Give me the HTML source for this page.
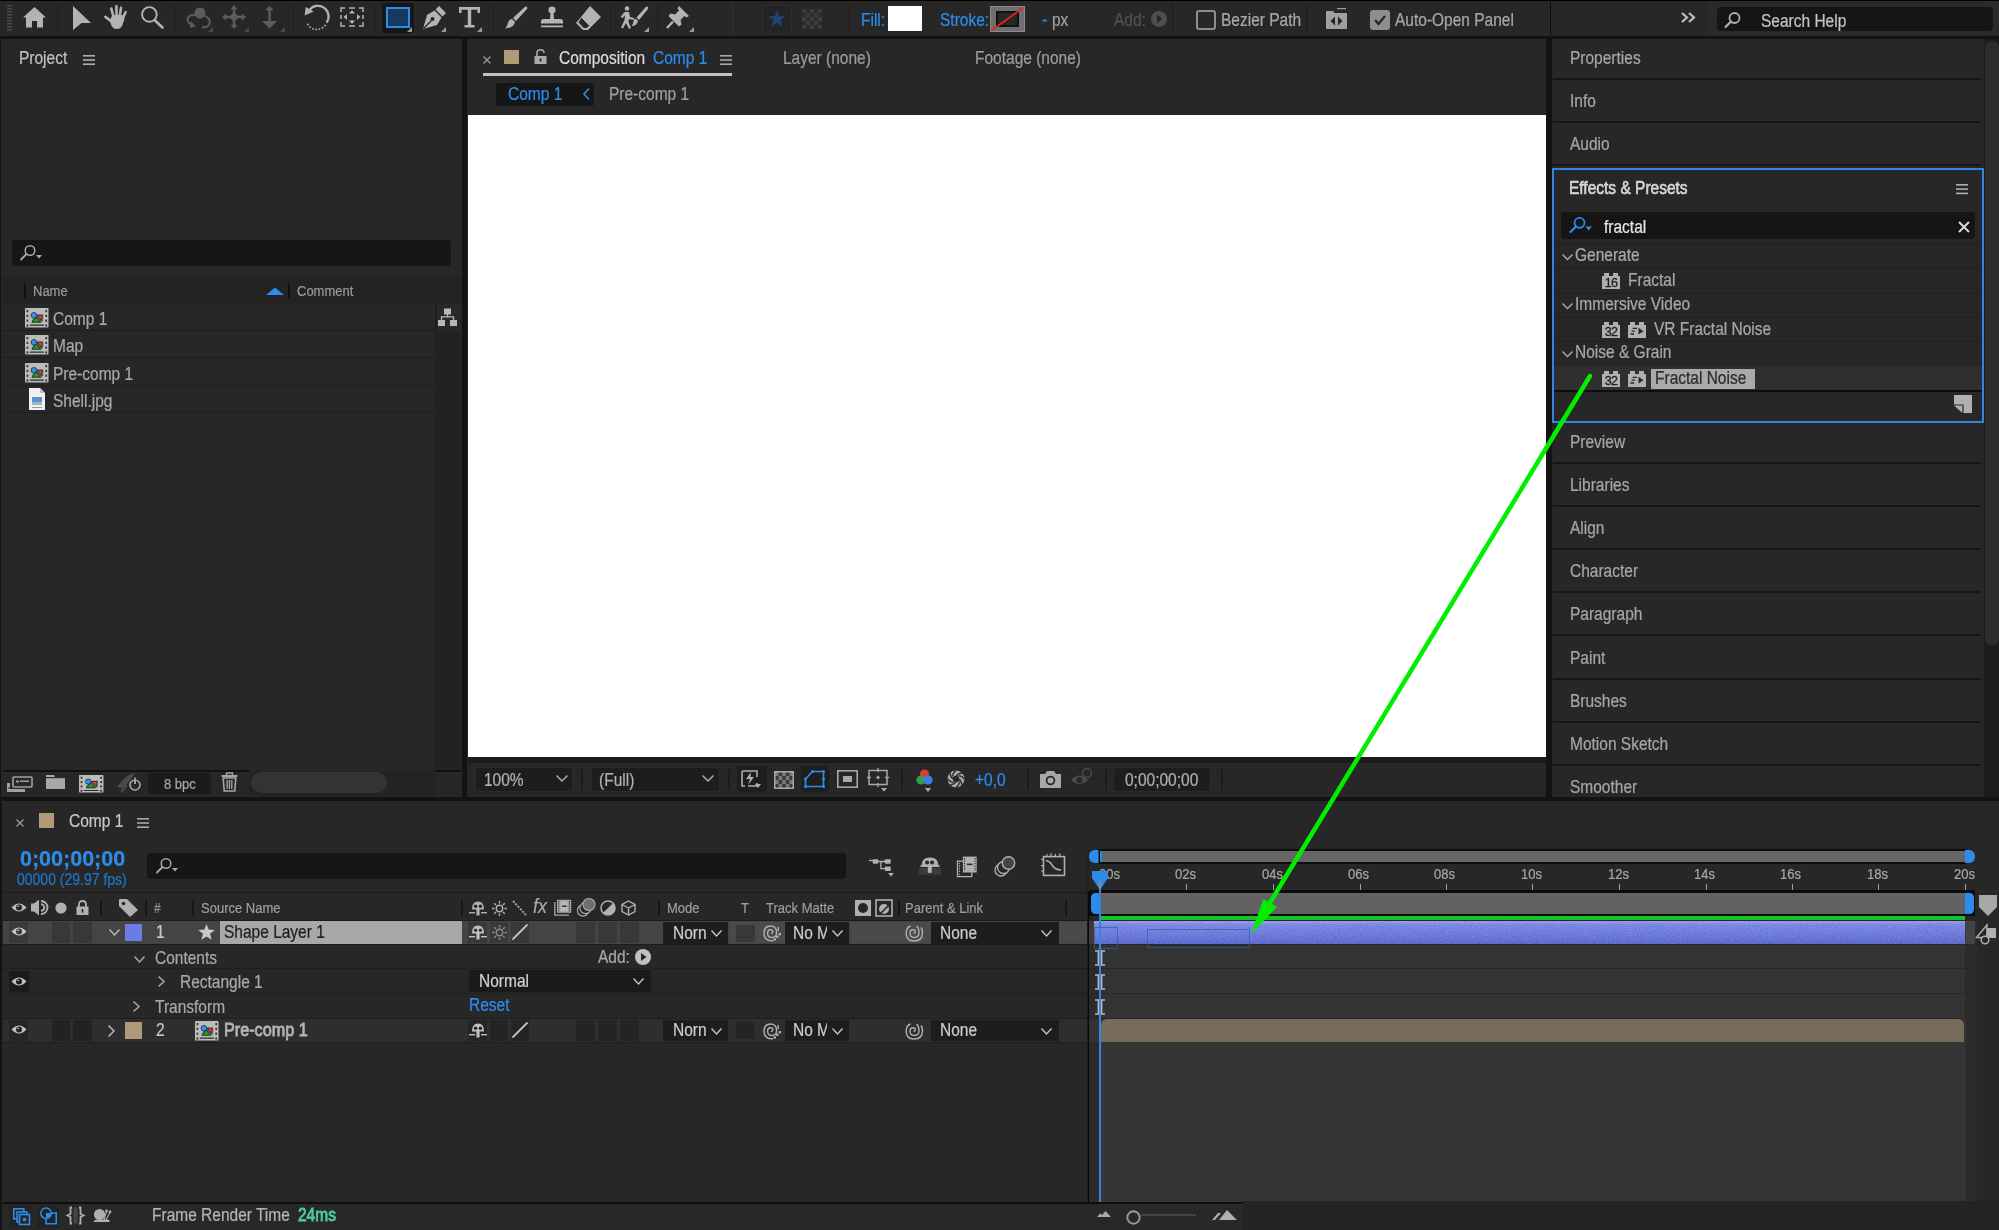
<!DOCTYPE html><html><head><meta charset="utf-8"><style>
html,body{margin:0;padding:0;width:1999px;height:1230px;overflow:hidden;background:#131313}
div{position:absolute;box-sizing:border-box}
.t{font-family:"Liberation Sans",sans-serif;line-height:1;white-space:nowrap;-webkit-text-stroke-width:0.2px}
#root{position:absolute;left:0;top:0;width:1999px;height:1230px;will-change:transform;overflow:hidden}
svg{overflow:visible}
</style></head><body><div id="root">
<div style="left:0px;top:0px;width:1999px;height:1230px;background:#131313;"></div>
<div style="left:0px;top:0px;width:1999px;height:1px;background:#000000;"></div>
<div style="left:0px;top:1px;width:1999px;height:35px;background:#272727;"></div>
<div style="left:1px;top:39px;width:461px;height:758px;background:#272727;"></div>
<div style="left:467px;top:39px;width:1079px;height:758px;background:#272727;"></div>
<div style="left:1552px;top:39px;width:432px;height:758px;background:#272727;"></div>
<div style="left:2px;top:801px;width:1997px;height:429px;background:#272727;"></div>
<svg style="position:absolute;left:7px;top:5px;" width="5" height="27" viewBox="0 0 5 27"><rect x="0" y="0" width="5" height="1.5" fill="#4a4a4a"/><rect x="0" y="3" width="5" height="1.5" fill="#4a4a4a"/><rect x="0" y="6" width="5" height="1.5" fill="#4a4a4a"/><rect x="0" y="9" width="5" height="1.5" fill="#4a4a4a"/><rect x="0" y="12" width="5" height="1.5" fill="#4a4a4a"/><rect x="0" y="15" width="5" height="1.5" fill="#4a4a4a"/><rect x="0" y="18" width="5" height="1.5" fill="#4a4a4a"/><rect x="0" y="21" width="5" height="1.5" fill="#4a4a4a"/><rect x="0" y="24" width="5" height="1.5" fill="#4a4a4a"/></svg>
<div style="left:57px;top:4px;width:1px;height:28px;background:#202020;"></div>
<svg style="position:absolute;left:23px;top:7px;" width="23" height="21" viewBox="0 0 23 21"><path d="M11.5 0 L23 10.5 L20 10.5 L20 20.5 L14 20.5 L14 14 L9 14 L9 20.5 L3 20.5 L3 10.5 L0 10.5 Z" fill="#b3b3b3"/></svg>
<svg style="position:absolute;left:73px;top:6px;" width="18" height="24" viewBox="0 0 18 24"><path d="M0 0 L18 17 L8.5 17 L0 24 Z" fill="#b3b3b3"/></svg>
<svg style="position:absolute;left:95px;top:0px;" width="40" height="36" viewBox="0 0 40 36"><path d="M10.4 16.9 L16.5 21.5 M16.3 8.6 L18.6 17 M21.4 6.4 L21.6 16 M26 7.9 L24.8 16 M30.6 12.2 L27.4 19" stroke="#b3b3b3" stroke-width="2.6" stroke-linecap="round"/><path d="M14.5 20.5 L17.5 15 L27.5 15 L29.5 19 L27.2 25.5 Q25.5 29 21.8 29 Q18.5 29 16.8 26.5 Z" fill="#b3b3b3"/></svg>
<svg style="position:absolute;left:140px;top:6px;" width="24" height="23" viewBox="0 0 24 23"><circle cx="9.4" cy="8.4" r="7.3" fill="none" stroke="#b3b3b3" stroke-width="1.9"/><path d="M15 14.5 L22.5 21.5" stroke="#b3b3b3" stroke-width="2.6" stroke-linecap="round"/></svg>
<div style="left:175px;top:4px;width:1px;height:28px;background:#202020;"></div>
<svg style="position:absolute;left:186px;top:7px;" width="27" height="25" viewBox="0 0 27 25"><circle cx="14" cy="6" r="5.5" fill="#5c5c5c"/><path d="M9 8 Q1 8 1.5 13 Q2 17 7 18" fill="none" stroke="#5c5c5c" stroke-width="2"/><path d="M4 14 L10 19 L4 21 Z" fill="#5c5c5c"/><path d="M19 9 Q26 12 23 18 Q21 21 16 20" fill="none" stroke="#5c5c5c" stroke-width="2"/></svg>
<svg style="position:absolute;left:208px;top:27px;" width="5" height="5" viewBox="0 0 5 5"><path d="M5 0 L5 5 L0 5 Z" fill="#4a4a4a"/></svg>
<svg style="position:absolute;left:222px;top:5px;" width="24" height="24" viewBox="0 0 24 24"><path d="M10.8 3 H13.2 V21 H10.8 Z M3 10.8 H21 V13.2 H3 Z" fill="#5c5c5c"/><path d="M12 0 L15.5 4.2 H8.5 Z M12 24 L15.5 19.8 H8.5 Z M0 12 L4.2 8.5 V15.5 Z M24 12 L19.8 8.5 V15.5 Z M12 7 L17 12 L12 17 L7 12 Z" fill="#5c5c5c"/></svg>
<svg style="position:absolute;left:244px;top:27px;" width="5" height="5" viewBox="0 0 5 5"><path d="M5 0 L5 5 L0 5 Z" fill="#4a4a4a"/></svg>
<svg style="position:absolute;left:262px;top:6px;" width="16" height="23" viewBox="0 0 16 23"><path d="M7.6 0 L12 4.2 H3.2 Z M6.4 3.5 H8.8 V16 H6.4 Z M0 15 H15.2 L7.6 22.6 Z" fill="#5c5c5c"/></svg>
<svg style="position:absolute;left:280px;top:27px;" width="5" height="5" viewBox="0 0 5 5"><path d="M5 0 L5 5 L0 5 Z" fill="#4a4a4a"/></svg>
<div style="left:293px;top:4px;width:1px;height:28px;background:#202020;"></div>
<svg style="position:absolute;left:304px;top:5px;" width="25" height="25" viewBox="0 0 25 25"><path d="M5.4 5.2 A10.5 10.5 0 0 1 22.6 17.6" fill="none" stroke="#b3b3b3" stroke-width="2.2"/><path d="M21 20.5 A10.5 10.5 0 0 1 2.6 16.5" fill="none" stroke="#b3b3b3" stroke-width="1.8" stroke-dasharray="0.1 3.2" stroke-linecap="round"/><path d="M0.6 10.6 L1.8 2 L9.6 6.6 Z" fill="#b3b3b3"/></svg>
<svg style="position:absolute;left:340px;top:7px;" width="24" height="20" viewBox="0 0 24 20"><path d="M1 5 V1 H5 M9 1 H15 M19 1 H23 V5 M23 8 V12 M23 15 V19 H19 M15 19 H9 M5 19 H1 V15 M1 12 V8" fill="none" stroke="#b3b3b3" stroke-width="1.5"/><path d="M12 3 L15 6.5 L9 6.5 Z M12 17 L15 13.5 L9 13.5 Z M3.5 10 L7 7 L7 13 Z M20.5 10 L17 7 L17 13 Z" fill="#b3b3b3"/></svg>
<div style="left:375px;top:4px;width:1px;height:28px;background:#202020;"></div>
<div style="left:382px;top:3px;width:32px;height:30px;background:#161616;border-radius:3px"></div>
<div style="left:386px;top:7px;width:24px;height:21px;background:#173860;border:2px solid #2d8ceb"></div>
<svg style="position:absolute;left:407px;top:27px;" width="5" height="5" viewBox="0 0 5 5"><path d="M5 0 L5 5 L0 5 Z" fill="#9a9a9a"/></svg>
<svg style="position:absolute;left:422px;top:6px;" width="24" height="23" viewBox="0 0 24 23"><path d="M17 0 L24 7 L20.5 10.5 L13.5 3.5 Z" fill="#b3b3b3"/><path d="M12.5 4.5 L19.5 11.5 L15 19 L1 23 L5 9 Z" fill="#b3b3b3"/><circle cx="10.5" cy="13" r="2" fill="#272727"/><path d="M1.5 22.5 L9.5 14.5" stroke="#272727" stroke-width="1.2"/></svg>
<svg style="position:absolute;left:441px;top:27px;" width="5" height="5" viewBox="0 0 5 5"><path d="M5 0 L5 5 L0 5 Z" fill="#9a9a9a"/></svg>
<svg style="position:absolute;left:459px;top:7px;" width="22" height="21" viewBox="0 0 22 21"><path d="M0 0 H21 V6 H18.5 V2.8 H12.2 V18 H15.5 V20.5 H5.5 V18 H8.8 V2.8 H2.5 V6 H0 Z" fill="#b3b3b3"/></svg>
<svg style="position:absolute;left:477px;top:27px;" width="5" height="5" viewBox="0 0 5 5"><path d="M5 0 L5 5 L0 5 Z" fill="#9a9a9a"/></svg>
<div style="left:493px;top:4px;width:1px;height:28px;background:#202020;"></div>
<svg style="position:absolute;left:504px;top:6px;" width="24" height="23" viewBox="0 0 24 23"><path d="M22.5 0.5 Q24 1.5 23 3 L12 15 L9 12 L21 0.8 Q21.8 0.2 22.5 0.5 Z" fill="#b3b3b3"/><path d="M8 13 L11 16 Q10 22 1 22.5 Q3.5 20 4 17 Q4.5 13.5 8 13 Z" fill="#b3b3b3"/></svg>
<svg style="position:absolute;left:540px;top:6px;" width="24" height="23" viewBox="0 0 24 23"><circle cx="12" cy="4" r="3.6" fill="#b3b3b3"/><path d="M10.5 7 H13.5 L14 13 H20.5 Q23 13 23 15.5 V17.5 H1 V15.5 Q1 13 3.5 13 H10 Z" fill="#b3b3b3"/><rect x="1" y="19.5" width="22" height="1.8" fill="#b3b3b3"/></svg>
<svg style="position:absolute;left:575px;top:6px;" width="26" height="23" viewBox="0 0 26 23"><path d="M15 0 L26 11 L13 24 L8 24 L1 17 Z" fill="#b3b3b3"/><path d="M6.5 11.5 L14.5 19.5 L11.5 22 L8.8 22 L3.5 16.5 Z" fill="#272727"/><path d="M6.5 11.5 L14.5 19.5" stroke="#b3b3b3" stroke-width="1"/></svg>
<div style="left:610px;top:4px;width:1px;height:28px;background:#202020;"></div>
<svg style="position:absolute;left:620px;top:6px;" width="29" height="24" viewBox="0 0 29 24"><circle cx="7" cy="2.5" r="2.3" fill="#b3b3b3"/><path d="M5 6 L9 6 L10 11 L14 12 L13.5 14 L9 13 L8.5 16 L11 22 L9 23 L6 17 L3 22.5 L1 21.5 L4.5 14 L5 9.5 L2.5 12 L0.5 11 L4 6.5 Z" fill="#b3b3b3"/><path d="M27.5 0.5 Q29 1.5 28 3 L19 14 L16.5 11.5 L26 0.8 Z" fill="#b3b3b3"/><path d="M15.5 12.5 L18 15 Q17 20 11.5 20 Q13 18.5 13.3 16 Q13.6 13 15.5 12.5 Z" fill="#b3b3b3"/></svg>
<svg style="position:absolute;left:644px;top:27px;" width="5" height="5" viewBox="0 0 5 5"><path d="M5 0 L5 5 L0 5 Z" fill="#9a9a9a"/></svg>
<div style="left:657px;top:4px;width:1px;height:28px;background:#202020;"></div>
<svg style="position:absolute;left:666px;top:6px;" width="23" height="23" viewBox="0 0 23 23"><path d="M13 0 L23 10 L20.5 11.5 L18.5 10 L14.5 14 L15.5 18.5 L13 20.5 L2.5 10 L4.5 7.5 L9 8.5 L13 4.5 L11.5 2.5 Z" fill="#b3b3b3"/><path d="M7 15.5 L1 22" stroke="#b3b3b3" stroke-width="2.5"/></svg>
<svg style="position:absolute;left:689px;top:27px;" width="5" height="5" viewBox="0 0 5 5"><path d="M5 0 L5 5 L0 5 Z" fill="#9a9a9a"/></svg>
<div style="left:732px;top:2px;width:1px;height:33px;background:#333333;"></div>
<div style="left:762px;top:5px;width:30px;height:29px;background:#242424;border:1px solid #2e2e2e;border-radius:3px"></div>
<svg style="position:absolute;left:768px;top:10px;" width="18" height="17" viewBox="0 0 18 17"><path d="M9 0 L11.2 6 L17.5 6.2 L12.5 10 L14.3 16.5 L9 12.8 L3.7 16.5 L5.5 10 L0.5 6.2 L6.8 6 Z" fill="#1f4470"/></svg>
<svg style="position:absolute;left:802px;top:9px;" width="20" height="20" viewBox="0 0 20 20"><rect width="20" height="20" fill="#2c2c2c"/><rect x="0" y="0" width="4" height="4" fill="#3c3c3c"/><rect x="0" y="8" width="4" height="4" fill="#3c3c3c"/><rect x="0" y="16" width="4" height="4" fill="#3c3c3c"/><rect x="4" y="4" width="4" height="4" fill="#3c3c3c"/><rect x="4" y="12" width="4" height="4" fill="#3c3c3c"/><rect x="8" y="0" width="4" height="4" fill="#3c3c3c"/><rect x="8" y="8" width="4" height="4" fill="#3c3c3c"/><rect x="8" y="16" width="4" height="4" fill="#3c3c3c"/><rect x="12" y="4" width="4" height="4" fill="#3c3c3c"/><rect x="12" y="12" width="4" height="4" fill="#3c3c3c"/><rect x="16" y="0" width="4" height="4" fill="#3c3c3c"/><rect x="16" y="8" width="4" height="4" fill="#3c3c3c"/><rect x="16" y="16" width="4" height="4" fill="#3c3c3c"/></svg>
<div style="left:849px;top:5px;width:1px;height:27px;background:#1a1a1a;"></div>
<div class="t" style="left:861px;top:13px;font-size:15.5px;color:#2d8ceb;transform:scaleY(1.16);transform-origin:0 14px;">Fill:</div>
<div style="left:888px;top:6px;width:34px;height:25px;background:#ffffff;"></div>
<div class="t" style="left:940px;top:13px;font-size:15.5px;color:#2d8ceb;transform:scaleY(1.16);transform-origin:0 14px;">Stroke:</div>
<div style="left:990px;top:6px;width:35px;height:26px;background:#6f6f6f;border:1px solid #8a8a8a"></div>
<div style="left:996px;top:11px;width:23px;height:16px;background:#272727;border:2px solid #111"></div>
<svg style="position:absolute;left:991px;top:7px;" width="33" height="24" viewBox="0 0 33 24"><path d="M0.5 23.5 L32.5 0.5" stroke="#e8261e" stroke-width="1.6"/></svg>
<div class="t" style="left:1042px;top:13px;font-size:15.5px;color:#2d8ceb;transform:scaleY(1.16);transform-origin:0 14px;">-</div>
<div class="t" style="left:1052px;top:13px;font-size:15.5px;color:#a0a0a0;transform:scaleY(1.16);transform-origin:0 14px;">px</div>
<div class="t" style="left:1114px;top:13px;font-size:15.5px;color:#525252;transform:scaleY(1.16);transform-origin:0 14px;">Add:</div>
<svg style="position:absolute;left:1151px;top:11px;" width="16" height="16" viewBox="0 0 16 16"><circle cx="8" cy="8" r="8" fill="#4e4e4e"/><path d="M6 4 L11.5 8 L6 12 Z" fill="#272727"/></svg>
<div style="left:1172px;top:4px;width:1px;height:28px;background:#1a1a1a;"></div>
<div style="left:1196px;top:10px;width:20px;height:20px;background:transparent;border:2px solid #8e8e8e;border-radius:3px"></div>
<div class="t" style="left:1221px;top:13px;font-size:15.5px;color:#a8a8a8;transform:scaleY(1.16);transform-origin:0 14px;">Bezier Path</div>
<div style="left:1306px;top:4px;width:1px;height:28px;background:#1a1a1a;"></div>
<svg style="position:absolute;left:1326px;top:8px;" width="21" height="21" viewBox="0 0 21 21"><path d="M0 3 H7 L8.5 5 H21 V21 H0 Z" fill="#a0a0a0"/><rect x="11" y="0" width="9" height="1.2" fill="#a0a0a0"/><path d="M9 8.5 L4.5 13 L9 17.5 Z M12 8.5 L16.5 13 L12 17.5 Z" fill="#272727"/></svg>
<div style="left:1370px;top:10px;width:20px;height:20px;background:#8e8e8e;border-radius:3px"></div>
<svg style="position:absolute;left:1373px;top:13px;" width="14" height="14" viewBox="0 0 14 14"><path d="M2 7 L5.5 11 L12 3" fill="none" stroke="#272727" stroke-width="2.4"/></svg>
<div class="t" style="left:1395px;top:13px;font-size:15.5px;color:#a8a8a8;transform:scaleY(1.16);transform-origin:0 14px;">Auto-Open Panel</div>
<div style="left:1550px;top:0px;width:1px;height:36px;background:#0e0e0e;"></div>
<svg style="position:absolute;left:1681px;top:12px;" width="15" height="11" viewBox="0 0 15 11"><path d="M1 1 L6 5.5 L1 10 M8 1 L13 5.5 L8 10" fill="none" stroke="#c0c0c0" stroke-width="2.2"/></svg>
<div style="left:1709px;top:1px;width:290px;height:35px;background:#2a2a2a;"></div>
<div style="left:1717px;top:7px;width:276px;height:24px;background:#151515;border-radius:4px"></div>
<svg style="position:absolute;left:1724px;top:12px;" width="17" height="16" viewBox="0 0 17 16"><circle cx="10.5" cy="6" r="5" fill="none" stroke="#b0b0b0" stroke-width="1.8"/><path d="M7 9.5 L1.5 15" stroke="#b0b0b0" stroke-width="2.2" stroke-linecap="round"/></svg>
<div class="t" style="left:1761px;top:14px;font-size:15.5px;color:#c4c4c4;transform:scaleY(1.16);transform-origin:0 14px;">Search Help</div>
<div class="t" style="left:19px;top:51px;font-size:15.5px;color:#c0c0c0;transform:scaleY(1.16);transform-origin:0 14px;">Project</div>
<svg style="position:absolute;left:83px;top:55px;" width="12" height="10" viewBox="0 0 12 10"><rect y="0" width="12" height="1.6" fill="#b0b0b0"/><rect y="4.2" width="12" height="1.6" fill="#b0b0b0"/><rect y="8.4" width="12" height="1.6" fill="#b0b0b0"/></svg>
<div style="left:12px;top:240px;width:439px;height:26px;background:#161616;border-radius:4px"></div>
<svg style="position:absolute;left:20px;top:245px;" width="25" height="16" viewBox="0 0 25 16"><circle cx="10" cy="5.5" r="4.8" fill="none" stroke="#a8a8a8" stroke-width="1.5"/><path d="M6.5 9 L1 14.5" stroke="#a8a8a8" stroke-width="1.8" stroke-linecap="round"/><path d="M16 10 L22 10 L19 13.5 Z" fill="#a8a8a8"/></svg>
<div style="left:3px;top:276px;width:432px;height:28px;background:#232323;"></div>
<div style="left:435px;top:276px;width:26px;height:28px;background:#232323;"></div>
<div style="left:24px;top:283px;width:2px;height:15px;background:#111;"></div>
<div class="t" style="left:33px;top:285px;font-size:13px;color:#9a9a9a;transform:scaleY(1.16);transform-origin:0 12px;">Name</div>
<svg style="position:absolute;left:266px;top:287px;" width="18" height="8" viewBox="0 0 18 8"><path d="M0 8 L9 0.5 L18 8 Z" fill="#2d8ceb"/></svg>
<div style="left:288px;top:283px;width:2px;height:15px;background:#111;"></div>
<div class="t" style="left:297px;top:285px;font-size:13px;color:#9a9a9a;transform:scaleY(1.16);transform-origin:0 12px;">Comment</div>
<div style="left:3px;top:304px;width:432px;height:27px;background:#272727;"></div>
<div style="left:3px;top:330px;width:432px;height:1px;background:#1d1d1d;"></div>
<svg style="position:absolute;left:25px;top:308px;" width="24" height="20" viewBox="0 0 24 20" preserveAspectRatio="none"><rect x="0" y="0" width="23.5" height="19.5" rx="0.8" fill="#bcbcbc"/><rect x="1.5" y="2.0" width="1.8" height="2.2" fill="#3a3a3a"/><rect x="20.3" y="2.0" width="1.8" height="2.2" fill="#3a3a3a"/><rect x="1.5" y="6.8" width="1.8" height="2.2" fill="#3a3a3a"/><rect x="20.3" y="6.8" width="1.8" height="2.2" fill="#3a3a3a"/><rect x="1.5" y="11.6" width="1.8" height="2.2" fill="#3a3a3a"/><rect x="20.3" y="11.6" width="1.8" height="2.2" fill="#3a3a3a"/><rect x="1.5" y="16.4" width="1.8" height="2.2" fill="#3a3a3a"/><rect x="20.3" y="16.4" width="1.8" height="2.2" fill="#3a3a3a"/><path d="M11.5 6.5 H18.2 V12.5 L16.5 14.8 H6.5 L7 12 Z" fill="#2a2a2a" opacity="0.55"/><path d="M12.2 7.2 L17.6 7.2 L16.4 12.6 Z" fill="#f03a3a" stroke="#1e1e1e" stroke-width="0.7"/><path d="M11.4 8.8 L15.4 14.2 L7.2 14.2 Z" fill="#1f9e2a" stroke="#1e1e1e" stroke-width="0.7"/><circle cx="8.9" cy="7.3" r="2.8" fill="#3592ea" stroke="#1e2a3a" stroke-width="0.8"/><rect x="4.7" y="16.6" width="14.3" height="1.2" rx="0.6" fill="#2a2a2a"/></svg>
<div class="t" style="left:53px;top:312px;font-size:15.5px;color:#a8a8a8;transform:scaleY(1.16);transform-origin:0 14px;">Comp 1</div>
<div style="left:3px;top:331px;width:432px;height:27px;background:#272727;"></div>
<div style="left:3px;top:357px;width:432px;height:1px;background:#1d1d1d;"></div>
<svg style="position:absolute;left:25px;top:335px;" width="24" height="20" viewBox="0 0 24 20" preserveAspectRatio="none"><rect x="0" y="0" width="23.5" height="19.5" rx="0.8" fill="#bcbcbc"/><rect x="1.5" y="2.0" width="1.8" height="2.2" fill="#3a3a3a"/><rect x="20.3" y="2.0" width="1.8" height="2.2" fill="#3a3a3a"/><rect x="1.5" y="6.8" width="1.8" height="2.2" fill="#3a3a3a"/><rect x="20.3" y="6.8" width="1.8" height="2.2" fill="#3a3a3a"/><rect x="1.5" y="11.6" width="1.8" height="2.2" fill="#3a3a3a"/><rect x="20.3" y="11.6" width="1.8" height="2.2" fill="#3a3a3a"/><rect x="1.5" y="16.4" width="1.8" height="2.2" fill="#3a3a3a"/><rect x="20.3" y="16.4" width="1.8" height="2.2" fill="#3a3a3a"/><path d="M11.5 6.5 H18.2 V12.5 L16.5 14.8 H6.5 L7 12 Z" fill="#2a2a2a" opacity="0.55"/><path d="M12.2 7.2 L17.6 7.2 L16.4 12.6 Z" fill="#f03a3a" stroke="#1e1e1e" stroke-width="0.7"/><path d="M11.4 8.8 L15.4 14.2 L7.2 14.2 Z" fill="#1f9e2a" stroke="#1e1e1e" stroke-width="0.7"/><circle cx="8.9" cy="7.3" r="2.8" fill="#3592ea" stroke="#1e2a3a" stroke-width="0.8"/><rect x="4.7" y="16.6" width="14.3" height="1.2" rx="0.6" fill="#2a2a2a"/></svg>
<div class="t" style="left:53px;top:339px;font-size:15.5px;color:#a8a8a8;transform:scaleY(1.16);transform-origin:0 14px;">Map</div>
<div style="left:3px;top:359px;width:432px;height:27px;background:#272727;"></div>
<div style="left:3px;top:385px;width:432px;height:1px;background:#1d1d1d;"></div>
<svg style="position:absolute;left:25px;top:363px;" width="24" height="20" viewBox="0 0 24 20" preserveAspectRatio="none"><rect x="0" y="0" width="23.5" height="19.5" rx="0.8" fill="#bcbcbc"/><rect x="1.5" y="2.0" width="1.8" height="2.2" fill="#3a3a3a"/><rect x="20.3" y="2.0" width="1.8" height="2.2" fill="#3a3a3a"/><rect x="1.5" y="6.8" width="1.8" height="2.2" fill="#3a3a3a"/><rect x="20.3" y="6.8" width="1.8" height="2.2" fill="#3a3a3a"/><rect x="1.5" y="11.6" width="1.8" height="2.2" fill="#3a3a3a"/><rect x="20.3" y="11.6" width="1.8" height="2.2" fill="#3a3a3a"/><rect x="1.5" y="16.4" width="1.8" height="2.2" fill="#3a3a3a"/><rect x="20.3" y="16.4" width="1.8" height="2.2" fill="#3a3a3a"/><path d="M11.5 6.5 H18.2 V12.5 L16.5 14.8 H6.5 L7 12 Z" fill="#2a2a2a" opacity="0.55"/><path d="M12.2 7.2 L17.6 7.2 L16.4 12.6 Z" fill="#f03a3a" stroke="#1e1e1e" stroke-width="0.7"/><path d="M11.4 8.8 L15.4 14.2 L7.2 14.2 Z" fill="#1f9e2a" stroke="#1e1e1e" stroke-width="0.7"/><circle cx="8.9" cy="7.3" r="2.8" fill="#3592ea" stroke="#1e2a3a" stroke-width="0.8"/><rect x="4.7" y="16.6" width="14.3" height="1.2" rx="0.6" fill="#2a2a2a"/></svg>
<div class="t" style="left:53px;top:367px;font-size:15.5px;color:#a8a8a8;transform:scaleY(1.16);transform-origin:0 14px;">Pre-comp 1</div>
<div style="left:3px;top:386px;width:432px;height:27px;background:#272727;"></div>
<div style="left:3px;top:412px;width:432px;height:1px;background:#1d1d1d;"></div>
<svg style="position:absolute;left:28px;top:388px;" width="18" height="22" viewBox="0 0 18 22"><path d="M1 0 H12 L17 5 V22 H1 Z" fill="#f0f0f0"/><path d="M12 0 V5 H17" fill="#bdbdbd"/><rect x="4" y="9" width="10" height="5" fill="#5b8fd6"/><rect x="4" y="14" width="10" height="3" fill="#9bb"/><rect x="4" y="19" width="10" height="1" fill="#999"/></svg>
<div class="t" style="left:53px;top:394px;font-size:15.5px;color:#a8a8a8;transform:scaleY(1.16);transform-origin:0 14px;">Shell.jpg</div>
<div style="left:435px;top:304px;width:26px;height:466px;background:#222222;"></div>
<div style="left:436px;top:304px;width:25px;height:27px;background:#282828;"></div>
<div style="left:435px;top:304px;width:2px;height:27px;background:#1e1e1e;"></div>
<svg style="position:absolute;left:438px;top:308px;" width="20" height="19" viewBox="0 0 20 19"><rect x="6" y="0.5" width="7" height="6" fill="#b8b8b8"/><path d="M9.5 6 V9 M3.5 12 V8.8 H15.5 V12" stroke="#b8b8b8" stroke-width="1.3" fill="none"/><rect x="0" y="12" width="7" height="6" fill="#b8b8b8"/><rect x="12" y="12" width="7" height="6" fill="#b8b8b8"/></svg>
<div style="left:3px;top:770px;width:246px;height:2px;background:#111;"></div>
<div style="left:435px;top:770px;width:26px;height:2px;background:#111;"></div>
<div style="left:3px;top:772px;width:246px;height:24px;background:#272727;"></div>
<div style="left:249px;top:771px;width:186px;height:25px;background:#232323;"></div>
<div style="left:435px;top:772px;width:26px;height:24px;background:#272727;"></div>
<svg style="position:absolute;left:7px;top:775px;" width="25" height="17" viewBox="0 0 25 17"><rect x="6" y="2" width="19" height="10" rx="1" fill="none" stroke="#a0a0a0" stroke-width="1.6"/><rect x="9" y="5.5" width="3" height="2" fill="#a0a0a0"/><rect x="13" y="5.5" width="9" height="1.5" fill="#a0a0a0"/><path d="M0 8 V17 H18 V14 H3 V8 Z" fill="#a0a0a0"/><rect x="1.5" y="12" width="1" height="2" fill="#272727"/></svg>
<svg style="position:absolute;left:46px;top:775px;" width="19" height="14" viewBox="0 0 19 14"><path d="M0 0 H8 L9 2 H19 V14 H0 Z" fill="#a8a8a8"/><rect x="0" y="2" width="19" height="1.2" fill="#272727"/></svg>
<svg style="position:absolute;left:79px;top:775px;" width="25" height="18" viewBox="0 0 24 20" preserveAspectRatio="none"><rect x="0" y="0" width="23.5" height="19.5" rx="0.8" fill="#bcbcbc"/><rect x="1.5" y="2.0" width="1.8" height="2.2" fill="#3a3a3a"/><rect x="20.3" y="2.0" width="1.8" height="2.2" fill="#3a3a3a"/><rect x="1.5" y="6.8" width="1.8" height="2.2" fill="#3a3a3a"/><rect x="20.3" y="6.8" width="1.8" height="2.2" fill="#3a3a3a"/><rect x="1.5" y="11.6" width="1.8" height="2.2" fill="#3a3a3a"/><rect x="20.3" y="11.6" width="1.8" height="2.2" fill="#3a3a3a"/><rect x="1.5" y="16.4" width="1.8" height="2.2" fill="#3a3a3a"/><rect x="20.3" y="16.4" width="1.8" height="2.2" fill="#3a3a3a"/><path d="M11.5 6.5 H18.2 V12.5 L16.5 14.8 H6.5 L7 12 Z" fill="#2a2a2a" opacity="0.55"/><path d="M12.2 7.2 L17.6 7.2 L16.4 12.6 Z" fill="#f03a3a" stroke="#1e1e1e" stroke-width="0.7"/><path d="M11.4 8.8 L15.4 14.2 L7.2 14.2 Z" fill="#1f9e2a" stroke="#1e1e1e" stroke-width="0.7"/><circle cx="8.9" cy="7.3" r="2.8" fill="#3592ea" stroke="#1e2a3a" stroke-width="0.8"/><rect x="4.7" y="16.6" width="14.3" height="1.2" rx="0.6" fill="#2a2a2a"/></svg>
<svg style="position:absolute;left:117px;top:773px;" width="25" height="19" viewBox="0 0 25 19"><path d="M0 14 L7 6 Q12 1 18 0 Q15 5 11 10 L5 15 Z" fill="#4c4c4c"/><path d="M4 19 L10 12" stroke="#4c4c4c" stroke-width="2"/><circle cx="18" cy="12" r="5" fill="none" stroke="#a8a8a8" stroke-width="1.6"/><rect x="17.2" y="5" width="1.6" height="6" fill="#a8a8a8"/><rect x="15.5" y="3.5" width="5" height="3" fill="#272727"/><rect x="17.2" y="4.5" width="1.6" height="6.5" fill="#a8a8a8"/></svg>
<div style="left:148px;top:773px;width:63px;height:21px;background:#1b1b1b;border-radius:3px"></div>
<div class="t" style="left:164px;top:778px;font-size:13px;color:#a8a8a8;transform:scaleY(1.16);transform-origin:0 12px;">8 bpc</div>
<svg style="position:absolute;left:221px;top:772px;" width="17" height="20" viewBox="0 0 17 20"><path d="M5.5 3 V1 H11.5 V3" fill="none" stroke="#a8a8a8" stroke-width="1.4"/><rect x="0.5" y="3" width="16" height="2" rx="0.8" fill="#a8a8a8"/><path d="M2.2 6 H14.8 L13.8 19 H3.2 Z" fill="none" stroke="#a8a8a8" stroke-width="1.6"/><path d="M6.2 8 V17 M8.5 8 V17 M10.8 8 V17" stroke="#a8a8a8" stroke-width="1.3"/></svg>
<div style="left:251px;top:772px;width:136px;height:21px;background:#333333;border-radius:11px"></div>
<svg style="position:absolute;left:483px;top:56px;" width="8" height="8" viewBox="0 0 8 8"><path d="M0.5 0.5 L7.5 7.5 M7.5 0.5 L0.5 7.5" stroke="#9a9a9a" stroke-width="1.3"/></svg>
<div style="left:504px;top:50px;width:15px;height:14px;background:#b09a78;"></div>
<svg style="position:absolute;left:534px;top:49px;" width="13" height="15" viewBox="0 0 13 15"><path d="M3 7 V4 Q3 0.8 6.5 0.8 Q10 0.8 10 4" fill="none" stroke="#aaa" stroke-width="1.6"/><rect x="0.5" y="7" width="12" height="8" fill="#aaa"/><rect x="5.6" y="9.5" width="1.8" height="3" fill="#272727"/></svg>
<div class="t" style="left:559px;top:51px;font-size:15.5px;color:#dcdcdc;transform:scaleY(1.16);transform-origin:0 14px;">Composition</div>
<div class="t" style="left:653px;top:51px;font-size:15.5px;color:#2d8ceb;transform:scaleY(1.16);transform-origin:0 14px;">Comp 1</div>
<svg style="position:absolute;left:720px;top:55px;" width="12" height="10" viewBox="0 0 12 10"><rect y="0" width="12" height="1.6" fill="#a8a8a8"/><rect y="4.2" width="12" height="1.6" fill="#a8a8a8"/><rect y="8.4" width="12" height="1.6" fill="#a8a8a8"/></svg>
<div style="left:483px;top:73px;width:249px;height:3px;background:#c2c2c2;"></div>
<div class="t" style="left:783px;top:51px;font-size:15.5px;color:#9c9c9c;transform:scaleY(1.16);transform-origin:0 14px;">Layer (none)</div>
<div class="t" style="left:975px;top:51px;font-size:15.5px;color:#9c9c9c;transform:scaleY(1.16);transform-origin:0 14px;">Footage (none)</div>
<div style="left:496px;top:83px;width:98px;height:23px;background:#161616;border-radius:3px"></div>
<div class="t" style="left:508px;top:87px;font-size:15.5px;color:#2d8ceb;transform:scaleY(1.16);transform-origin:0 14px;">Comp 1</div>
<svg style="position:absolute;left:583px;top:88px;" width="7" height="12" viewBox="0 0 7 12"><path d="M6 0.5 L1 6 L6 11.5" fill="none" stroke="#2d8ceb" stroke-width="1.6"/></svg>
<div class="t" style="left:609px;top:87px;font-size:15.5px;color:#a0a0a0;transform:scaleY(1.16);transform-origin:0 14px;">Pre-comp 1</div>
<div style="left:468px;top:115px;width:1078px;height:642px;background:#ffffff;"></div>
<div style="left:468px;top:757px;width:1078px;height:39px;background:#272727;"></div>
<div style="left:468px;top:757px;width:1078px;height:6px;background:#1b1b1b;"></div>
<div style="left:475px;top:767px;width:98px;height:25px;background:#1d1d1d;border-radius:4px;border:1px solid #2a2a2a"></div>
<div class="t" style="left:484px;top:773px;font-size:15.5px;color:#b0b0b0;transform:scaleY(1.16);transform-origin:0 14px;">100%</div>
<svg style="position:absolute;left:556px;top:775px;" width="12" height="7" viewBox="0 0 12 7"><path d="M0.5 0.5 L6 6 L11.5 0.5" fill="none" stroke="#b0b0b0" stroke-width="1.5"/></svg>
<div style="left:581px;top:769px;width:2px;height:21px;background:#1c1c1c;"></div>
<div style="left:591px;top:767px;width:129px;height:25px;background:#1d1d1d;border-radius:4px;border:1px solid #2a2a2a"></div>
<div class="t" style="left:599px;top:773px;font-size:15.5px;color:#b0b0b0;transform:scaleY(1.16);transform-origin:0 14px;">(Full)</div>
<svg style="position:absolute;left:702px;top:775px;" width="12" height="7" viewBox="0 0 12 7"><path d="M0.5 0.5 L6 6 L11.5 0.5" fill="none" stroke="#b0b0b0" stroke-width="1.5"/></svg>
<div style="left:728px;top:769px;width:2px;height:21px;background:#1c1c1c;"></div>
<div style="left:737px;top:766px;width:30px;height:26px;background:#1e1e1e;border-radius:3px"></div>
<svg style="position:absolute;left:741px;top:769px;" width="21" height="20" viewBox="0 0 21 20"><path d="M1 2 H16 V8 M16 14 V17 H7 M4 17 H1 V2" fill="none" stroke="#b0b0b0" stroke-width="1.6"/><path d="M10 3 L5 10 H9 L7 16 L13 8 H9.5 Z" fill="#b0b0b0"/><path d="M14 15 L20 15 L17 19 Z" fill="#b0b0b0"/></svg>
<svg style="position:absolute;left:774px;top:771px;" width="20" height="18" viewBox="0 0 20 18"><rect x="1" y="1" width="18" height="16" fill="#3a3a3a"/><rect x="1.0" y="1" width="3.6" height="4" fill="#7a7a7a"/><rect x="1.0" y="9" width="3.6" height="4" fill="#7a7a7a"/><rect x="4.6" y="5" width="3.6" height="4" fill="#7a7a7a"/><rect x="4.6" y="13" width="3.6" height="4" fill="#7a7a7a"/><rect x="8.2" y="1" width="3.6" height="4" fill="#7a7a7a"/><rect x="8.2" y="9" width="3.6" height="4" fill="#7a7a7a"/><rect x="11.8" y="5" width="3.6" height="4" fill="#7a7a7a"/><rect x="11.8" y="13" width="3.6" height="4" fill="#7a7a7a"/><rect x="15.4" y="1" width="3.6" height="4" fill="#7a7a7a"/><rect x="15.4" y="9" width="3.6" height="4" fill="#7a7a7a"/><rect x="0.75" y="0.75" width="18.5" height="16.5" fill="none" stroke="#a8a8a8" stroke-width="1.5"/></svg>
<div style="left:801px;top:766px;width:28px;height:26px;background:#1e1e1e;border-radius:3px"></div>
<svg style="position:absolute;left:804px;top:770px;" width="21" height="18" viewBox="0 0 21 18"><path d="M1.5 9 L8.5 1.5 H19.5 V16.5 H1.5 Z" fill="none" stroke="#2d8ceb" stroke-width="1.6"/><circle cx="1.5" cy="9" r="1.5" fill="#2d8ceb"/><circle cx="8.5" cy="1.5" r="1.5" fill="#2d8ceb"/><circle cx="19.5" cy="1.5" r="1.5" fill="#2d8ceb"/><circle cx="19.5" cy="9" r="1.5" fill="#2d8ceb"/><circle cx="19.5" cy="16.5" r="1.5" fill="#2d8ceb"/><circle cx="1.5" cy="16.5" r="1.5" fill="#2d8ceb"/></svg>
<svg style="position:absolute;left:837px;top:770px;" width="21" height="18" viewBox="0 0 21 18"><rect x="0.8" y="0.8" width="19.4" height="16.4" fill="none" stroke="#a8a8a8" stroke-width="1.6"/><rect x="6" y="6" width="9" height="6" fill="#a8a8a8"/></svg>
<svg style="position:absolute;left:867px;top:768px;" width="22" height="24" viewBox="0 0 22 24"><rect x="2" y="2.5" width="18" height="14" fill="none" stroke="#a8a8a8" stroke-width="1.5"/><path d="M11 0 V4 M11 15 V19 M0 9.5 H4 M18 9.5 H22" stroke="#a8a8a8" stroke-width="1.4"/><path d="M11 7.5 L13 9.5 L11 11.5 L9 9.5 Z" fill="#a8a8a8"/><path d="M14 20 L20 20 L17 23.5 Z" fill="#a8a8a8"/></svg>
<div style="left:901px;top:769px;width:2px;height:21px;background:#1c1c1c;"></div>
<svg style="position:absolute;left:915px;top:769px;" width="19" height="23" viewBox="0 0 19 23"><circle cx="9.5" cy="5" r="4.6" fill="#e23a3a"/><circle cx="6" cy="11" r="4.6" fill="#2fa04a"/><circle cx="13" cy="11" r="4.6" fill="#3d7fe0"/><path d="M10 19 L16 19 L13 23 Z" fill="#b0b0b0"/></svg>
<svg style="position:absolute;left:947px;top:770px;" width="18" height="18" viewBox="0 0 18 18"><circle cx="9" cy="9" r="8.5" fill="#a8a8a8"/><circle cx="9" cy="9" r="3.2" fill="#272727"/><path d="M9 0.5 Q5 4 6 6.5 M17.5 9 Q14 5 11.5 6 M9 17.5 Q13 14 12 11.5 M0.5 9 Q4 13 6.5 12 M3 3 Q4 8 6 8.5 M15 3 Q10 4 9.5 6 M15 15 Q14 10 12 9.5 M3 15 Q8 14 8.5 12" fill="none" stroke="#272727" stroke-width="1.3"/></svg>
<div class="t" style="left:975px;top:773px;font-size:15.5px;color:#2d8ceb;transform:scaleY(1.16);transform-origin:0 14px;">+0,0</div>
<div style="left:1027px;top:769px;width:2px;height:21px;background:#1c1c1c;"></div>
<svg style="position:absolute;left:1040px;top:771px;" width="21" height="17" viewBox="0 0 21 17"><path d="M0 3 H5 L7 0 H14 L16 3 H21 V17 H0 Z" fill="#a8a8a8"/><circle cx="10.5" cy="9.5" r="4.8" fill="#272727"/><circle cx="10.5" cy="9.5" r="3" fill="#a8a8a8"/></svg>
<svg style="position:absolute;left:1071px;top:768px;" width="22" height="20" viewBox="0 0 22 20"><path d="M0 12 Q8 3 17 12 Q8 20 0 12 Z" fill="#4a4a4a"/><circle cx="8.5" cy="12" r="3" fill="#272727"/><circle cx="16" cy="5" r="4.5" fill="none" stroke="#4a4a4a" stroke-width="1.5"/></svg>
<div style="left:1105px;top:769px;width:2px;height:21px;background:#1c1c1c;"></div>
<div style="left:1113px;top:767px;width:98px;height:25px;background:#1d1d1d;border-radius:4px;border:1px solid #2a2a2a"></div>
<div class="t" style="left:1125px;top:773px;font-size:15.5px;color:#b0b0b0;transform:scaleY(1.16);transform-origin:0 14px;">0;00;00;00</div>
<div style="left:1221px;top:769px;width:2px;height:21px;background:#1c1c1c;"></div>
<div class="t" style="left:1570px;top:51px;font-size:15.5px;color:#a6a6a6;transform:scaleY(1.16);transform-origin:0 14px;">Properties</div>
<div class="t" style="left:1570px;top:94px;font-size:15.5px;color:#a6a6a6;transform:scaleY(1.16);transform-origin:0 14px;">Info</div>
<div class="t" style="left:1570px;top:137px;font-size:15.5px;color:#a6a6a6;transform:scaleY(1.16);transform-origin:0 14px;">Audio</div>
<div style="left:1553px;top:78px;width:428px;height:2px;background:#161616;"></div>
<div style="left:1553px;top:121px;width:428px;height:2px;background:#161616;"></div>
<div style="left:1553px;top:164px;width:428px;height:2px;background:#161616;"></div>
<div style="left:1552px;top:168px;width:432px;height:255px;background:#272727;border:2px solid #3086dd"></div>
<div class="t" style="left:1569px;top:181px;font-size:15.5px;color:#d6d6d6;transform:scaleY(1.16);transform-origin:0 14px;-webkit-text-stroke-width:0.55px">Effects &amp; Presets</div>
<svg style="position:absolute;left:1956px;top:184px;" width="12" height="10" viewBox="0 0 12 10"><rect y="0" width="12" height="1.6" fill="#b0b0b0"/><rect y="4.3" width="12" height="1.6" fill="#b0b0b0"/><rect y="8.6" width="12" height="1.6" fill="#b0b0b0"/></svg>
<div style="left:1561px;top:212px;width:414px;height:27px;background:#151515;border-radius:4px"></div>
<svg style="position:absolute;left:1569px;top:217px;" width="26" height="16" viewBox="0 0 26 16"><circle cx="10.5" cy="5.8" r="5" fill="none" stroke="#2d8ceb" stroke-width="1.8"/><path d="M7 9.5 L1.5 15" stroke="#2d8ceb" stroke-width="2.2" stroke-linecap="round"/><path d="M16.5 9.5 L23 9.5 L19.7 13.5 Z" fill="#2d8ceb"/></svg>
<div class="t" style="left:1604px;top:220px;font-size:15.5px;color:#e6e6e6;transform:scaleY(1.16);transform-origin:0 14px;">fractal</div>
<svg style="position:absolute;left:1958px;top:221px;" width="12" height="12" viewBox="0 0 12 12"><path d="M1 1 L11 11 M11 1 L1 11" stroke="#d8d8d8" stroke-width="2"/></svg>
<div style="left:1554px;top:244px;width:428px;height:1px;background:#1f1f1f;"></div>
<svg style="position:absolute;left:1562px;top:254px;" width="11" height="7" viewBox="0 0 11 7"><path d="M0.5 0.5 L5.5 5.5 L10.5 0.5" fill="none" stroke="#a8a8a8" stroke-width="1.5"/></svg>
<div class="t" style="left:1575px;top:248px;font-size:15.5px;color:#a8a8a8;transform:scaleY(1.16);transform-origin:0 14px;">Generate</div>
<div style="left:1554px;top:268px;width:428px;height:1px;background:#1f1f1f;"></div>
<svg style="position:absolute;left:1602px;top:273px;" width="18" height="16" viewBox="0 0 18 16"><path d="M0 3 H2 V0 H7 V3 H11 V0 H16 V3 H18 V16 H0 Z" fill="#b0b0b0"/><text x="9" y="13.6" font-family="Liberation Sans" font-size="12.5" fill="#1e1e1e" stroke="#1e1e1e" stroke-width="0.3" text-anchor="middle" letter-spacing="-0.6">16</text></svg>
<div class="t" style="left:1628px;top:273px;font-size:15.5px;color:#a8a8a8;transform:scaleY(1.16);transform-origin:0 14px;">Fractal</div>
<div style="left:1554px;top:293px;width:428px;height:1px;background:#1f1f1f;"></div>
<svg style="position:absolute;left:1562px;top:303px;" width="11" height="7" viewBox="0 0 11 7"><path d="M0.5 0.5 L5.5 5.5 L10.5 0.5" fill="none" stroke="#a8a8a8" stroke-width="1.5"/></svg>
<div class="t" style="left:1575px;top:297px;font-size:15.5px;color:#a8a8a8;transform:scaleY(1.16);transform-origin:0 14px;">Immersive Video</div>
<div style="left:1554px;top:317px;width:428px;height:1px;background:#1f1f1f;"></div>
<svg style="position:absolute;left:1602px;top:322px;" width="18" height="16" viewBox="0 0 18 16"><path d="M0 3 H2 V0 H7 V3 H11 V0 H16 V3 H18 V16 H0 Z" fill="#b0b0b0"/><text x="9" y="13.6" font-family="Liberation Sans" font-size="12.5" fill="#1e1e1e" stroke="#1e1e1e" stroke-width="0.3" text-anchor="middle" letter-spacing="-0.6">32</text></svg>
<svg style="position:absolute;left:1628px;top:322px;" width="18" height="16" viewBox="0 0 18 16"><path d="M0 3 H2 V0 H7 V3 H11 V0 H16 V3 H18 V16 H0 Z" fill="#b0b0b0"/><path d="M4.6 6.4 H9 M3.6 9.2 H7 M2.4 12 H6" stroke="#272727" stroke-width="1.3"/><path d="M10.5 5.8 L15.5 9.2 L10.5 12.6 Z" fill="#272727"/></svg>
<div class="t" style="left:1654px;top:322px;font-size:15.5px;color:#a8a8a8;transform:scaleY(1.16);transform-origin:0 14px;">VR Fractal Noise</div>
<div style="left:1554px;top:341px;width:428px;height:1px;background:#1f1f1f;"></div>
<svg style="position:absolute;left:1562px;top:351px;" width="11" height="7" viewBox="0 0 11 7"><path d="M0.5 0.5 L5.5 5.5 L10.5 0.5" fill="none" stroke="#a8a8a8" stroke-width="1.5"/></svg>
<div class="t" style="left:1575px;top:345px;font-size:15.5px;color:#a8a8a8;transform:scaleY(1.16);transform-origin:0 14px;">Noise &amp; Grain</div>
<div style="left:1554px;top:366px;width:428px;height:1px;background:#1f1f1f;"></div>
<div style="left:1554px;top:366px;width:428px;height:25px;background:#2f2f2f;"></div>
<svg style="position:absolute;left:1602px;top:371px;" width="18" height="16" viewBox="0 0 18 16"><path d="M0 3 H2 V0 H7 V3 H11 V0 H16 V3 H18 V16 H0 Z" fill="#b0b0b0"/><text x="9" y="13.6" font-family="Liberation Sans" font-size="12.5" fill="#1e1e1e" stroke="#1e1e1e" stroke-width="0.3" text-anchor="middle" letter-spacing="-0.6">32</text></svg>
<svg style="position:absolute;left:1628px;top:371px;" width="18" height="16" viewBox="0 0 18 16"><path d="M0 3 H2 V0 H7 V3 H11 V0 H16 V3 H18 V16 H0 Z" fill="#b0b0b0"/><path d="M4.6 6.4 H9 M3.6 9.2 H7 M2.4 12 H6" stroke="#272727" stroke-width="1.3"/><path d="M10.5 5.8 L15.5 9.2 L10.5 12.6 Z" fill="#272727"/></svg>
<div style="left:1651px;top:369px;width:104px;height:20px;background:#a9a9a9;"></div>
<div class="t" style="left:1655px;top:371px;font-size:15.5px;color:#2b2b2b;transform:scaleY(1.16);transform-origin:0 14px;">Fractal Noise</div>
<div style="left:1554px;top:390px;width:428px;height:2px;background:#0e0e0e;"></div>
<svg style="position:absolute;left:1954px;top:395px;" width="18" height="18" viewBox="0 0 18 18"><path d="M0 0 H18 V18 H9.6 V9.4 H0 Z" fill="#b0b0b0"/><path d="M0 10.6 H8.4 V18 Z" fill="#b0b0b0"/></svg>
<div class="t" style="left:1570px;top:435px;font-size:15.5px;color:#a6a6a6;transform:scaleY(1.16);transform-origin:0 14px;">Preview</div>
<div style="left:1553px;top:462px;width:428px;height:2px;background:#161616;"></div>
<div class="t" style="left:1570px;top:478px;font-size:15.5px;color:#a6a6a6;transform:scaleY(1.16);transform-origin:0 14px;">Libraries</div>
<div style="left:1553px;top:505px;width:428px;height:2px;background:#161616;"></div>
<div class="t" style="left:1570px;top:521px;font-size:15.5px;color:#a6a6a6;transform:scaleY(1.16);transform-origin:0 14px;">Align</div>
<div style="left:1553px;top:548px;width:428px;height:2px;background:#161616;"></div>
<div class="t" style="left:1570px;top:564px;font-size:15.5px;color:#a6a6a6;transform:scaleY(1.16);transform-origin:0 14px;">Character</div>
<div style="left:1553px;top:591px;width:428px;height:2px;background:#161616;"></div>
<div class="t" style="left:1570px;top:607px;font-size:15.5px;color:#a6a6a6;transform:scaleY(1.16);transform-origin:0 14px;">Paragraph</div>
<div style="left:1553px;top:634px;width:428px;height:2px;background:#161616;"></div>
<div class="t" style="left:1570px;top:651px;font-size:15.5px;color:#a6a6a6;transform:scaleY(1.16);transform-origin:0 14px;">Paint</div>
<div style="left:1553px;top:678px;width:428px;height:2px;background:#161616;"></div>
<div class="t" style="left:1570px;top:694px;font-size:15.5px;color:#a6a6a6;transform:scaleY(1.16);transform-origin:0 14px;">Brushes</div>
<div style="left:1553px;top:721px;width:428px;height:2px;background:#161616;"></div>
<div class="t" style="left:1570px;top:737px;font-size:15.5px;color:#a6a6a6;transform:scaleY(1.16);transform-origin:0 14px;">Motion Sketch</div>
<div style="left:1553px;top:764px;width:428px;height:2px;background:#161616;"></div>
<div class="t" style="left:1570px;top:780px;font-size:15.5px;color:#a6a6a6;transform:scaleY(1.16);transform-origin:0 14px;">Smoother</div>
<div style="left:1984px;top:39px;width:15px;height:758px;background:#1c1c1c;"></div>
<div style="left:1985px;top:41px;width:14px;height:604px;background:#2c2c2c;border-radius:6px"></div>
<svg style="position:absolute;left:16px;top:819px;" width="8" height="8" viewBox="0 0 8 8"><path d="M0.5 0.5 L7.5 7.5 M7.5 0.5 L0.5 7.5" stroke="#9a9a9a" stroke-width="1.3"/></svg>
<div style="left:39px;top:813px;width:15px;height:15px;background:#b09a78;"></div>
<div class="t" style="left:69px;top:814px;font-size:15.5px;color:#c8c8c8;transform:scaleY(1.16);transform-origin:0 14px;">Comp 1</div>
<svg style="position:absolute;left:137px;top:818px;" width="12" height="10" viewBox="0 0 12 10"><rect y="0" width="12" height="1.6" fill="#a8a8a8"/><rect y="4.2" width="12" height="1.6" fill="#a8a8a8"/><rect y="8.4" width="12" height="1.6" fill="#a8a8a8"/></svg>
<div class="t" style="left:20px;top:849px;font-size:21.5px;color:#2d8ceb;font-weight:bold;">0;00;00;00</div>
<div class="t" style="left:17px;top:873px;font-size:14px;color:#1f76c6;transform:scaleY(1.16);transform-origin:0 13px;">00000 (29.97 fps)</div>
<div style="left:147px;top:853px;width:699px;height:26px;background:#161616;border-radius:4px"></div>
<svg style="position:absolute;left:156px;top:858px;" width="25" height="16" viewBox="0 0 25 16"><circle cx="10" cy="5.5" r="4.8" fill="none" stroke="#a8a8a8" stroke-width="1.5"/><path d="M6.5 9 L1 14.5" stroke="#a8a8a8" stroke-width="1.8" stroke-linecap="round"/><path d="M16 10 L22 10 L19 13.5 Z" fill="#a8a8a8"/></svg>
<svg style="position:absolute;left:868px;top:855px;" width="28" height="24" viewBox="0 0 28 24"><path d="M1 5.5 H5" stroke="#b0b0b0" stroke-width="1.3"/><rect x="4.7" y="4.3" width="5.5" height="4.4" rx="1" fill="#b0b0b0"/><rect x="16.8" y="4.3" width="6" height="4.4" rx="1" fill="#b0b0b0"/><path d="M10 6.5 H17 M12.9 6.5 V13.7 H17" fill="none" stroke="#b0b0b0" stroke-width="1.3"/><rect x="16.8" y="11.5" width="6" height="4.4" rx="1" fill="#b0b0b0"/><path d="M20 18 L26 18 L23 21.4 Z" fill="#b0b0b0"/></svg>
<svg style="position:absolute;left:918px;top:856px;" width="24" height="20" viewBox="0 0 24 20"><rect x="0.9" y="12" width="22" height="6.6" fill="#3c3c3c"/><path d="M3.6 9.8 Q3.6 1.5 12 1.5 Q20.4 1.5 20.4 9.8 L21.5 8.5 L21.5 11 H2.5 L2.5 8.5 Z" fill="#b0b0b0"/><circle cx="9.1" cy="6.6" r="2" fill="#272727"/><circle cx="14.1" cy="6.6" r="2" fill="#272727"/><rect x="9.8" y="10" width="4" height="7" rx="1.5" fill="#b0b0b0"/></svg>
<svg style="position:absolute;left:956px;top:856px;" width="22" height="21" viewBox="0 0 22 21"><rect x="1.5" y="5.2" width="14.3" height="15.4" fill="#272727" stroke="#b0b0b0" stroke-width="1.3"/><path d="M3.5 7 V19" stroke="#b0b0b0" stroke-width="1.2" stroke-dasharray="1.3 1.3"/><rect x="6.9" y="0.6" width="13.8" height="15.9" fill="#b0b0b0"/><path d="M8.6 2 V15 M19 2 V15" stroke="#272727" stroke-width="1.1" stroke-dasharray="1.2 1.3"/><rect x="11" y="7.6" width="5.5" height="1.5" fill="#272727"/></svg>
<svg style="position:absolute;left:993px;top:856px;" width="23" height="21" viewBox="0 0 23 21"><circle cx="8" cy="14" r="6" fill="#272727" stroke="#b0b0b0" stroke-width="1.3"/><circle cx="10.5" cy="11.5" r="6" fill="#272727" stroke="#b0b0b0" stroke-width="1.3"/><circle cx="15.5" cy="7" r="6.2" fill="#454545" stroke="#b0b0b0" stroke-width="1.4"/></svg>
<svg style="position:absolute;left:1041px;top:853px;" width="25" height="25" viewBox="0 0 25 25"><rect x="2.5" y="3.6" width="21" height="18.8" fill="none" stroke="#b0b0b0" stroke-width="1.6"/><path d="M5 7.8 Q8.5 7.8 11 12 Q14 17 20 17" fill="none" stroke="#b0b0b0" stroke-width="1.5"/><path d="M6 3.6 V1 M10 3.6 V0.3 M14.4 3.6 V1 M18.8 3.6 V0.3 M0 6.5 H2.5 M0 12.6 H2.5 M0 18 H2.5" stroke="#b0b0b0" stroke-width="1.2"/></svg>
<div style="left:3px;top:892px;width:1085px;height:1px;background:#1c1c1c;"></div>
<svg style="position:absolute;left:11px;top:902px;" width="16" height="11" viewBox="0 0 16 11"><path d="M0.5 5.5 Q8 -2.5 15.5 5.5 Q8 13.5 0.5 5.5 Z" fill="#b8b8b8"/><circle cx="8" cy="5.5" r="3" fill="#272727"/><circle cx="7" cy="4.3" r="0.9" fill="#b8b8b8"/></svg>
<svg style="position:absolute;left:31px;top:899px;" width="18" height="17" viewBox="0 0 18 17"><path d="M0 4.5 H3 L8 0.5 V16.5 L3 12.5 H0 Z" fill="#b0b0b0"/><path d="M10 5.2 A3.3 3.3 0 0 1 10 11.8 M10 2 A6.5 6.5 0 0 1 10 15" fill="none" stroke="#b0b0b0" stroke-width="1.9"/></svg>
<svg style="position:absolute;left:55px;top:902px;" width="12" height="12" viewBox="0 0 12 12"><circle cx="6" cy="6" r="5.6" fill="#b0b0b0"/></svg>
<svg style="position:absolute;left:76px;top:900px;" width="13" height="15" viewBox="0 0 13 15"><path d="M3 7 V4.5 Q3 1 6.5 1 Q10 1 10 4.5 V7" fill="none" stroke="#b0b0b0" stroke-width="1.8"/><rect x="0.5" y="6.5" width="12" height="8.5" fill="#b0b0b0"/><rect x="5.7" y="9" width="1.6" height="3.5" fill="#272727"/></svg>
<div style="left:100px;top:900px;width:2px;height:16px;background:#161616;"></div>
<svg style="position:absolute;left:119px;top:899px;" width="19" height="18" viewBox="0 0 19 18"><path d="M0 1 Q0 0 1 0 H8 L19 11 L11 18 L0 7 Z" fill="#b0b0b0"/><circle cx="4.5" cy="4.5" r="1.8" fill="#272727"/></svg>
<div style="left:145px;top:900px;width:2px;height:16px;background:#161616;"></div>
<div class="t" style="left:154px;top:903px;font-size:12px;color:#909090;transform:scaleY(1.16);transform-origin:0 11px;">#</div>
<div style="left:192px;top:900px;width:2px;height:16px;background:#161616;"></div>
<div class="t" style="left:201px;top:902px;font-size:13px;color:#9e9e9e;transform:scaleY(1.16);transform-origin:0 12px;">Source Name</div>
<div style="left:461px;top:900px;width:2px;height:16px;background:#161616;"></div>
<svg style="position:absolute;left:469px;top:901px;" width="18" height="15" viewBox="0 0 18 15"><path d="M3 8.5 Q3 0.5 9 0.5 Q15 0.5 15 8.5 Z" fill="#b0b0b0"/><circle cx="6.6" cy="5.2" r="1.7" fill="#272727"/><circle cx="11.4" cy="5.2" r="1.7" fill="#272727"/><rect x="7.4" y="8" width="3.2" height="6.5" fill="#b0b0b0"/><rect x="0" y="11" width="6" height="1.4" fill="#b0b0b0"/><rect x="12" y="11" width="6" height="1.4" fill="#b0b0b0"/></svg>
<svg style="position:absolute;left:492px;top:901px;" width="15" height="15" viewBox="0 0 15 15"><circle cx="7.5" cy="7.5" r="3.2" fill="none" stroke="#b0b0b0" stroke-width="1.4"/><path d="M7.5 0 V2.6 M7.5 12.4 V15 M0 7.5 H2.6 M12.4 7.5 H15 M2.2 2.2 L4 4 M11 11 L12.8 12.8 M12.8 2.2 L11 4 M4 11 L2.2 12.8" stroke="#b0b0b0" stroke-width="1.4"/></svg>
<svg style="position:absolute;left:512px;top:900px;" width="15" height="16" viewBox="0 0 15 16"><path d="M1 1 L14 15" stroke="#b0b0b0" stroke-width="1.7" stroke-dasharray="2.2 1.2"/></svg>
<div class="t" style="left:533px;top:898px;font-size:18px;color:#a8a8a8;transform:scaleY(1.16);transform-origin:0 16px;font-family:"Liberation Sans",sans-serif;letter-spacing:-1px"><i>fx</i></div>
<svg style="position:absolute;left:554px;top:899px;" width="18" height="17" viewBox="0 0 18 17"><path d="M0.8 3 V16.2 H15" fill="none" stroke="#a8a8a8" stroke-width="1.3"/><rect x="3" y="0.8" width="14.2" height="13" fill="#a8a8a8"/><path d="M4.8 2 V13 M15.4 2 V13" stroke="#272727" stroke-width="1.1" stroke-dasharray="1.2 1.1"/><rect x="6.8" y="2.8" width="6.8" height="9" fill="#b8b8b8"/><rect x="8" y="6.5" width="4.5" height="1.4" fill="#272727"/></svg>
<svg style="position:absolute;left:577px;top:898px;" width="19" height="19" viewBox="0 0 19 19"><circle cx="6" cy="12.5" r="5.6" fill="#272727" stroke="#a8a8a8" stroke-width="1.2"/><circle cx="8.5" cy="10" r="5.6" fill="#272727" stroke="#a8a8a8" stroke-width="1.2"/><circle cx="12" cy="6.5" r="6" fill="#6e6e6e" stroke="#a8a8a8" stroke-width="1.2"/></svg>
<svg style="position:absolute;left:600px;top:900px;" width="16" height="16" viewBox="0 0 16 16"><circle cx="8" cy="8" r="7" fill="none" stroke="#b0b0b0" stroke-width="1.5"/><path d="M13 3 A7 7 0 0 1 3 13 Z" fill="#b0b0b0"/></svg>
<svg style="position:absolute;left:621px;top:900px;" width="15" height="16" viewBox="0 0 15 16"><path d="M7.5 1 L14 4.5 V11.5 L7.5 15 L1 11.5 V4.5 Z M1 4.5 L7.5 8 L14 4.5 M7.5 8 V15" fill="none" stroke="#b0b0b0" stroke-width="1.4"/></svg>
<div style="left:658px;top:900px;width:2px;height:16px;background:#161616;"></div>
<div class="t" style="left:667px;top:902px;font-size:13px;color:#9e9e9e;transform:scaleY(1.16);transform-origin:0 12px;">Mode</div>
<div class="t" style="left:741px;top:902px;font-size:13px;color:#9e9e9e;transform:scaleY(1.16);transform-origin:0 12px;">T</div>
<div class="t" style="left:766px;top:902px;font-size:13px;color:#9e9e9e;transform:scaleY(1.16);transform-origin:0 12px;">Track Matte</div>
<svg style="position:absolute;left:855px;top:900px;" width="16" height="16" viewBox="0 0 16 16"><rect width="16" height="16" fill="#b0b0b0"/><circle cx="8" cy="8" r="5" fill="#272727"/></svg>
<svg style="position:absolute;left:876px;top:900px;" width="16" height="16" viewBox="0 0 16 16"><rect x="0" y="0" width="16" height="16" fill="none" stroke="#b0b0b0" stroke-width="1.6"/><circle cx="8" cy="9" r="5" fill="#b0b0b0"/><path d="M3 15 L15 3" stroke="#272727" stroke-width="1.6"/></svg>
<div style="left:898px;top:900px;width:2px;height:16px;background:#161616;"></div>
<div class="t" style="left:905px;top:902px;font-size:13px;color:#9e9e9e;transform:scaleY(1.16);transform-origin:0 12px;">Parent &amp; Link</div>
<div style="left:1065px;top:900px;width:2px;height:16px;background:#161616;"></div>
<div style="left:3px;top:920px;width:1085px;height:1px;background:#1c1c1c;"></div>
<div style="left:3px;top:921px;width:1085px;height:23px;background:#444444;"></div>
<div style="left:9px;top:922px;width:19px;height:21px;background:#393939;"></div>
<svg style="position:absolute;left:11px;top:926px;" width="16" height="11" viewBox="0 0 16 11"><path d="M0.5 5.5 Q8 -2.5 15.5 5.5 Q8 13.5 0.5 5.5 Z" fill="#c4c4c4"/><circle cx="8" cy="5.5" r="3" fill="#393939"/><circle cx="7" cy="4.3" r="0.9" fill="#c4c4c4"/></svg>
<div style="left:52px;top:922px;width:18px;height:21px;background:#383838;"></div>
<div style="left:73px;top:922px;width:19px;height:21px;background:#383838;"></div>
<svg style="position:absolute;left:109px;top:929px;" width="11" height="7" viewBox="0 0 11 7"><path d="M0.5 0.5 L5.5 6 L10.5 0.5" fill="none" stroke="#b8b8b8" stroke-width="1.5"/></svg>
<div style="left:125px;top:924px;width:17px;height:17px;background:#6b7de3;"></div>
<div class="t" style="left:156px;top:925px;font-size:15.5px;color:#c8c8c8;transform:scaleY(1.16);transform-origin:0 14px;">1</div>
<svg style="position:absolute;left:198px;top:924px;" width="17" height="16" viewBox="0 0 17 16"><path d="M8.5 0 L10.6 5.6 L16.8 5.9 L12 9.7 L13.7 15.8 L8.5 12.4 L3.3 15.8 L5 9.7 L0.2 5.9 L6.4 5.6 Z" fill="#c8c8c8"/></svg>
<div style="left:220px;top:921px;width:242px;height:23px;background:#a8a8a8;"></div>
<div class="t" style="left:224px;top:925px;font-size:15.5px;color:#1e1e1e;transform:scaleY(1.16);transform-origin:0 14px;">Shape Layer 1</div>
<div style="left:468px;top:922px;width:19px;height:21px;background:#383838;"></div>
<svg style="position:absolute;left:469px;top:925px;" width="18" height="15" viewBox="0 0 18 15"><path d="M3 8.5 Q3 0.5 9 0.5 Q15 0.5 15 8.5 Z" fill="#c0c0c0"/><circle cx="6.6" cy="5.2" r="1.7" fill="#383838"/><circle cx="11.4" cy="5.2" r="1.7" fill="#383838"/><rect x="7.4" y="8" width="3.2" height="6.5" fill="#c0c0c0"/><rect x="0" y="11" width="6" height="1.4" fill="#c0c0c0"/><rect x="12" y="11" width="6" height="1.4" fill="#c0c0c0"/></svg>
<div style="left:490px;top:922px;width:18px;height:21px;background:#383838;"></div>
<svg style="position:absolute;left:492px;top:925px;" width="15" height="15" viewBox="0 0 15 15"><circle cx="7.5" cy="7.5" r="3.2" fill="none" stroke="#888" stroke-width="1.4"/><path d="M7.5 0 V2.6 M7.5 12.4 V15 M0 7.5 H2.6 M12.4 7.5 H15 M2.2 2.2 L4 4 M11 11 L12.8 12.8 M12.8 2.2 L11 4 M4 11 L2.2 12.8" stroke="#888" stroke-width="1.4"/></svg>
<div style="left:511px;top:922px;width:18px;height:21px;background:#383838;"></div>
<svg style="position:absolute;left:512px;top:924px;" width="16" height="16" viewBox="0 0 16 16"><path d="M1 15 L15 1" stroke="#c0c0c0" stroke-width="1.8" stroke-linecap="round"/></svg>
<div style="left:576px;top:922px;width:19px;height:21px;background:#383838;"></div>
<div style="left:598px;top:922px;width:19px;height:21px;background:#383838;"></div>
<div style="left:620px;top:922px;width:19px;height:21px;background:#383838;"></div>
<div style="left:730px;top:922px;width:55px;height:21px;background:#4a4a4a;"></div>
<div style="left:851px;top:922px;width:80px;height:21px;background:#4a4a4a;"></div>
<div style="left:1059px;top:922px;width:29px;height:21px;background:#4a4a4a;"></div>
<div style="left:663px;top:922px;width:65px;height:22px;background:#1d1d1d;"></div>
<div class="t" style="left:673px;top:926px;font-size:15.5px;color:#cccccc;transform:scaleY(1.16);transform-origin:0 14px;">Norn</div>
<svg style="position:absolute;left:711px;top:930px;" width="11" height="7" viewBox="0 0 11 7"><path d="M0.5 0.5 L5.5 6 L10.5 0.5" fill="none" stroke="#c0c0c0" stroke-width="1.5"/></svg>
<div style="left:736px;top:925px;width:19px;height:17px;background:#383838;"></div>
<svg style="position:absolute;left:763px;top:925px;" width="18" height="17" viewBox="0 0 18 17"><path d="M8 8.5 Q9.8 8.5 9.8 6.8 Q9.8 4.8 7.6 4.8 Q4.6 4.8 4.6 8.3 Q4.6 12.5 8.8 12.5 Q13.6 12.5 13.6 7.5 Q13.6 1 7.5 1 Q1 1 1 8.3 Q1 15.8 8.8 15.8 H10" fill="none" stroke="#b0b0b0" stroke-width="1.4"/><rect x="14.5" y="2" width="1.4" height="4" fill="#b0b0b0"/><rect x="13" y="10.5" width="2.4" height="2.4" fill="#b0b0b0"/><rect x="15.6" y="8" width="2.4" height="2.4" fill="#b0b0b0"/><rect x="10.5" y="13.2" width="2.4" height="2.4" fill="#b0b0b0"/></svg>
<div style="left:785px;top:922px;width:64px;height:22px;background:#1d1d1d;"></div>
<div class="t" style="left:793px;top:926px;font-size:15.5px;color:#cccccc;transform:scaleY(1.16);transform-origin:0 14px;"><span style="display:inline-block;width:34px;overflow:hidden;vertical-align:top">No Matte</span></div>
<svg style="position:absolute;left:832px;top:930px;" width="11" height="7" viewBox="0 0 11 7"><path d="M0.5 0.5 L5.5 6 L10.5 0.5" fill="none" stroke="#c0c0c0" stroke-width="1.5"/></svg>
<svg style="position:absolute;left:905px;top:925px;" width="18" height="17" viewBox="0 0 18 17"><path d="M8.5 8.5 Q10.3 8.5 10.3 6.8 Q10.3 4.8 8.1 4.8 Q5 4.8 5 8.3 Q5 12.5 9.2 12.5 Q14 12.5 14 7.5 Q14 3 11.5 1 M16 2.5 Q17.5 4.5 17.5 8 Q17.5 16 9 16 Q1.2 16 1.2 8.3 Q1.2 2.5 5.5 1" fill="none" stroke="#b0b0b0" stroke-width="1.4"/></svg>
<div style="left:931px;top:922px;width:128px;height:22px;background:#1d1d1d;"></div>
<div class="t" style="left:940px;top:926px;font-size:15.5px;color:#cccccc;transform:scaleY(1.16);transform-origin:0 14px;">None</div>
<svg style="position:absolute;left:1041px;top:930px;" width="11" height="7" viewBox="0 0 11 7"><path d="M0.5 0.5 L5.5 6 L10.5 0.5" fill="none" stroke="#c0c0c0" stroke-width="1.5"/></svg>
<div style="left:3px;top:944px;width:1085px;height:1px;background:#1c1c1c;"></div>
<svg style="position:absolute;left:134px;top:956px;" width="11" height="7" viewBox="0 0 11 7"><path d="M0.5 0.5 L5.5 6 L10.5 0.5" fill="none" stroke="#a8a8a8" stroke-width="1.5"/></svg>
<div class="t" style="left:155px;top:951px;font-size:15.5px;color:#a8a8a8;transform:scaleY(1.16);transform-origin:0 14px;">Contents</div>
<div class="t" style="left:598px;top:950px;font-size:15.5px;color:#a8a8a8;transform:scaleY(1.16);transform-origin:0 14px;">Add:</div>
<svg style="position:absolute;left:635px;top:949px;" width="16" height="16" viewBox="0 0 16 16"><circle cx="8" cy="8" r="8" fill="#c0c0c0"/><path d="M6 4 L11.5 8 L6 12 Z" fill="#272727"/></svg>
<div style="left:3px;top:968px;width:1085px;height:1px;background:#1e1e1e;"></div>
<div style="left:9px;top:971px;width:20px;height:21px;background:#1b1b1b;"></div>
<svg style="position:absolute;left:11px;top:976px;" width="16" height="11" viewBox="0 0 16 11"><path d="M0.5 5.5 Q8 -2.5 15.5 5.5 Q8 13.5 0.5 5.5 Z" fill="#c0c0c0"/><circle cx="8" cy="5.5" r="3" fill="#1b1b1b"/><circle cx="7" cy="4.3" r="0.9" fill="#c0c0c0"/></svg>
<svg style="position:absolute;left:158px;top:976px;" width="7" height="11" viewBox="0 0 7 11"><path d="M0.5 0.5 L6 5.5 L0.5 10.5" fill="none" stroke="#a8a8a8" stroke-width="1.5"/></svg>
<div class="t" style="left:180px;top:975px;font-size:15.5px;color:#a8a8a8;transform:scaleY(1.16);transform-origin:0 14px;">Rectangle 1</div>
<div style="left:469px;top:970px;width:182px;height:22px;background:#1a1a1a;border-radius:2px"></div>
<div class="t" style="left:479px;top:974px;font-size:15.5px;color:#d0d0d0;transform:scaleY(1.16);transform-origin:0 14px;">Normal</div>
<svg style="position:absolute;left:633px;top:978px;" width="11" height="7" viewBox="0 0 11 7"><path d="M0.5 0.5 L5.5 6 L10.5 0.5" fill="none" stroke="#c0c0c0" stroke-width="1.5"/></svg>
<div style="left:3px;top:993px;width:1085px;height:1px;background:#1e1e1e;"></div>
<svg style="position:absolute;left:133px;top:1001px;" width="7" height="11" viewBox="0 0 7 11"><path d="M0.5 0.5 L6 5.5 L0.5 10.5" fill="none" stroke="#a8a8a8" stroke-width="1.5"/></svg>
<div class="t" style="left:155px;top:1000px;font-size:15.5px;color:#a8a8a8;transform:scaleY(1.16);transform-origin:0 14px;">Transform</div>
<div class="t" style="left:469px;top:998px;font-size:15.5px;color:#2d8ceb;transform:scaleY(1.16);transform-origin:0 14px;">Reset</div>
<div style="left:3px;top:1018px;width:1085px;height:1px;background:#1e1e1e;"></div>
<div style="left:3px;top:1019px;width:1085px;height:23px;background:#2e2e2e;"></div>
<div style="left:9px;top:1020px;width:19px;height:21px;background:#252525;"></div>
<svg style="position:absolute;left:11px;top:1024px;" width="16" height="11" viewBox="0 0 16 11"><path d="M0.5 5.5 Q8 -2.5 15.5 5.5 Q8 13.5 0.5 5.5 Z" fill="#c0c0c0"/><circle cx="8" cy="5.5" r="3" fill="#252525"/><circle cx="7" cy="4.3" r="0.9" fill="#c0c0c0"/></svg>
<div style="left:52px;top:1020px;width:18px;height:21px;background:#222;"></div>
<div style="left:73px;top:1020px;width:19px;height:21px;background:#222;"></div>
<svg style="position:absolute;left:108px;top:1025px;" width="7" height="12" viewBox="0 0 7 12"><path d="M0.5 0.5 L6 6.0 L0.5 11.5" fill="none" stroke="#b8b8b8" stroke-width="1.5"/></svg>
<div style="left:125px;top:1022px;width:17px;height:17px;background:#ae9a78;"></div>
<div class="t" style="left:156px;top:1023px;font-size:15.5px;color:#c8c8c8;transform:scaleY(1.16);transform-origin:0 14px;">2</div>
<svg style="position:absolute;left:195px;top:1021px;" width="24" height="20" viewBox="0 0 24 20" preserveAspectRatio="none"><rect x="0" y="0" width="23.5" height="19.5" rx="0.8" fill="#bcbcbc"/><rect x="1.5" y="2.0" width="1.8" height="2.2" fill="#3a3a3a"/><rect x="20.3" y="2.0" width="1.8" height="2.2" fill="#3a3a3a"/><rect x="1.5" y="6.8" width="1.8" height="2.2" fill="#3a3a3a"/><rect x="20.3" y="6.8" width="1.8" height="2.2" fill="#3a3a3a"/><rect x="1.5" y="11.6" width="1.8" height="2.2" fill="#3a3a3a"/><rect x="20.3" y="11.6" width="1.8" height="2.2" fill="#3a3a3a"/><rect x="1.5" y="16.4" width="1.8" height="2.2" fill="#3a3a3a"/><rect x="20.3" y="16.4" width="1.8" height="2.2" fill="#3a3a3a"/><path d="M11.5 6.5 H18.2 V12.5 L16.5 14.8 H6.5 L7 12 Z" fill="#2a2a2a" opacity="0.55"/><path d="M12.2 7.2 L17.6 7.2 L16.4 12.6 Z" fill="#f03a3a" stroke="#1e1e1e" stroke-width="0.7"/><path d="M11.4 8.8 L15.4 14.2 L7.2 14.2 Z" fill="#1f9e2a" stroke="#1e1e1e" stroke-width="0.7"/><circle cx="8.9" cy="7.3" r="2.8" fill="#3592ea" stroke="#1e2a3a" stroke-width="0.8"/><rect x="4.7" y="16.6" width="14.3" height="1.2" rx="0.6" fill="#2a2a2a"/></svg>
<div class="t" style="left:224px;top:1022px;font-size:16.2px;color:#b4b4b4;transform:scaleY(1.16);transform-origin:0 14px;-webkit-text-stroke-width:0.75px">Pre-comp 1</div>
<div style="left:468px;top:1020px;width:19px;height:21px;background:#242424;"></div>
<svg style="position:absolute;left:469px;top:1023px;" width="18" height="15" viewBox="0 0 18 15"><path d="M3 8.5 Q3 0.5 9 0.5 Q15 0.5 15 8.5 Z" fill="#c0c0c0"/><circle cx="6.6" cy="5.2" r="1.7" fill="#242424"/><circle cx="11.4" cy="5.2" r="1.7" fill="#242424"/><rect x="7.4" y="8" width="3.2" height="6.5" fill="#c0c0c0"/><rect x="0" y="11" width="6" height="1.4" fill="#c0c0c0"/><rect x="12" y="11" width="6" height="1.4" fill="#c0c0c0"/></svg>
<div style="left:490px;top:1020px;width:18px;height:21px;background:#242424;"></div>
<div style="left:511px;top:1020px;width:18px;height:21px;background:#242424;"></div>
<svg style="position:absolute;left:512px;top:1022px;" width="16" height="16" viewBox="0 0 16 16"><path d="M1 15 L15 1" stroke="#c0c0c0" stroke-width="1.8" stroke-linecap="round"/></svg>
<div style="left:576px;top:1020px;width:19px;height:21px;background:#242424;"></div>
<div style="left:598px;top:1020px;width:19px;height:21px;background:#242424;"></div>
<div style="left:620px;top:1020px;width:19px;height:21px;background:#242424;"></div>
<div style="left:663px;top:1020px;width:65px;height:21px;background:#1d1d1d;"></div>
<div class="t" style="left:673px;top:1023px;font-size:15.5px;color:#cccccc;transform:scaleY(1.16);transform-origin:0 14px;">Norn</div>
<svg style="position:absolute;left:711px;top:1028px;" width="11" height="7" viewBox="0 0 11 7"><path d="M0.5 0.5 L5.5 6 L10.5 0.5" fill="none" stroke="#c0c0c0" stroke-width="1.5"/></svg>
<div style="left:736px;top:1022px;width:18px;height:17px;background:#242424;"></div>
<svg style="position:absolute;left:763px;top:1023px;" width="18" height="17" viewBox="0 0 18 17"><path d="M8 8.5 Q9.8 8.5 9.8 6.8 Q9.8 4.8 7.6 4.8 Q4.6 4.8 4.6 8.3 Q4.6 12.5 8.8 12.5 Q13.6 12.5 13.6 7.5 Q13.6 1 7.5 1 Q1 1 1 8.3 Q1 15.8 8.8 15.8 H10" fill="none" stroke="#b0b0b0" stroke-width="1.4"/><rect x="14.5" y="2" width="1.4" height="4" fill="#b0b0b0"/><rect x="13" y="10.5" width="2.4" height="2.4" fill="#b0b0b0"/><rect x="15.6" y="8" width="2.4" height="2.4" fill="#b0b0b0"/><rect x="10.5" y="13.2" width="2.4" height="2.4" fill="#b0b0b0"/></svg>
<div style="left:785px;top:1020px;width:64px;height:21px;background:#1d1d1d;"></div>
<div class="t" style="left:793px;top:1023px;font-size:15.5px;color:#cccccc;transform:scaleY(1.16);transform-origin:0 14px;"><span style="display:inline-block;width:34px;overflow:hidden;vertical-align:top">No Matte</span></div>
<svg style="position:absolute;left:832px;top:1028px;" width="11" height="7" viewBox="0 0 11 7"><path d="M0.5 0.5 L5.5 6 L10.5 0.5" fill="none" stroke="#c0c0c0" stroke-width="1.5"/></svg>
<svg style="position:absolute;left:905px;top:1023px;" width="18" height="17" viewBox="0 0 18 17"><path d="M8.5 8.5 Q10.3 8.5 10.3 6.8 Q10.3 4.8 8.1 4.8 Q5 4.8 5 8.3 Q5 12.5 9.2 12.5 Q14 12.5 14 7.5 Q14 3 11.5 1 M16 2.5 Q17.5 4.5 17.5 8 Q17.5 16 9 16 Q1.2 16 1.2 8.3 Q1.2 2.5 5.5 1" fill="none" stroke="#b0b0b0" stroke-width="1.4"/></svg>
<div style="left:931px;top:1020px;width:128px;height:21px;background:#1d1d1d;"></div>
<div class="t" style="left:940px;top:1023px;font-size:15.5px;color:#cccccc;transform:scaleY(1.16);transform-origin:0 14px;">None</div>
<svg style="position:absolute;left:1041px;top:1028px;" width="11" height="7" viewBox="0 0 11 7"><path d="M0.5 0.5 L5.5 6 L10.5 0.5" fill="none" stroke="#c0c0c0" stroke-width="1.5"/></svg>
<div style="left:3px;top:1042px;width:1085px;height:1px;background:#1e1e1e;"></div>
<div style="left:1087px;top:892px;width:1px;height:310px;background:#1a1a1a;"></div>
<div style="left:1088px;top:892px;width:1px;height:310px;background:#080808;"></div>
<div style="left:1087px;top:849px;width:2px;height:43px;background:#222222;"></div>
<div style="left:1098px;top:849px;width:868px;height:15px;background:#0c0c0c;"></div>
<div style="left:1100px;top:851px;width:865px;height:11px;background:#666666;"></div>
<svg style="position:absolute;left:1089px;top:850px;" width="10" height="13" viewBox="0 0 10 13"><path d="M9.5 0 H5.5 Q0 1 0 6.5 Q0 12 5.5 13 H9.5 Z" fill="#2d8ceb"/></svg>
<div style="left:1100px;top:851px;width:2px;height:11px;background:#2d8ceb;"></div>
<svg style="position:absolute;left:1965px;top:850px;" width="10" height="13" viewBox="0 0 10 13"><path d="M0 0 H4.5 Q10 1 10 6.5 Q10 12 4.5 13 H0 Z" fill="#2d8ceb"/></svg>
<div class="t" style="left:1099px;top:868px;font-size:13px;color:#a8a8a8;transform:scaleY(1.16);transform-origin:0 12px;">00s</div>
<div style="left:1186px;top:884px;width:1px;height:6px;background:#a0a0a0;"></div>
<div class="t" style="left:1175px;top:868px;font-size:13px;color:#a8a8a8;transform:scaleY(1.16);transform-origin:0 12px;">02s</div>
<div style="left:1273px;top:884px;width:1px;height:6px;background:#a0a0a0;"></div>
<div class="t" style="left:1262px;top:868px;font-size:13px;color:#a8a8a8;transform:scaleY(1.16);transform-origin:0 12px;">04s</div>
<div style="left:1360px;top:884px;width:1px;height:6px;background:#a0a0a0;"></div>
<div class="t" style="left:1348px;top:868px;font-size:13px;color:#a8a8a8;transform:scaleY(1.16);transform-origin:0 12px;">06s</div>
<div style="left:1446px;top:884px;width:1px;height:6px;background:#a0a0a0;"></div>
<div class="t" style="left:1434px;top:868px;font-size:13px;color:#a8a8a8;transform:scaleY(1.16);transform-origin:0 12px;">08s</div>
<div style="left:1532px;top:884px;width:1px;height:6px;background:#a0a0a0;"></div>
<div class="t" style="left:1521px;top:868px;font-size:13px;color:#a8a8a8;transform:scaleY(1.16);transform-origin:0 12px;">10s</div>
<div style="left:1619px;top:884px;width:1px;height:6px;background:#a0a0a0;"></div>
<div class="t" style="left:1608px;top:868px;font-size:13px;color:#a8a8a8;transform:scaleY(1.16);transform-origin:0 12px;">12s</div>
<div style="left:1706px;top:884px;width:1px;height:6px;background:#a0a0a0;"></div>
<div class="t" style="left:1694px;top:868px;font-size:13px;color:#a8a8a8;transform:scaleY(1.16);transform-origin:0 12px;">14s</div>
<div style="left:1792px;top:884px;width:1px;height:6px;background:#a0a0a0;"></div>
<div class="t" style="left:1780px;top:868px;font-size:13px;color:#a8a8a8;transform:scaleY(1.16);transform-origin:0 12px;">16s</div>
<div style="left:1878px;top:884px;width:1px;height:6px;background:#a0a0a0;"></div>
<div class="t" style="left:1867px;top:868px;font-size:13px;color:#a8a8a8;transform:scaleY(1.16);transform-origin:0 12px;">18s</div>
<div style="left:1965px;top:884px;width:1px;height:6px;background:#a0a0a0;"></div>
<div class="t" style="left:1954px;top:868px;font-size:13px;color:#a8a8a8;transform:scaleY(1.16);transform-origin:0 12px;">20s</div>
<div style="left:1089px;top:890px;width:886px;height:2px;background:#0c0c0c;"></div>
<div style="left:1089px;top:892px;width:886px;height:24px;background:#0c0c0c;"></div>
<div style="left:1098px;top:893px;width:867px;height:21px;background:#626262;"></div>
<svg style="position:absolute;left:1091px;top:893px;" width="9" height="21" viewBox="0 0 9 21"><path d="M9 0 H5 Q0 0 0 5 V16 Q0 21 5 21 H9 Z" fill="#2d8ceb"/></svg>
<svg style="position:absolute;left:1965px;top:893px;" width="9" height="21" viewBox="0 0 9 21"><path d="M0 0 H4 Q9 0 9 5 V16 Q9 21 4 21 H0 Z" fill="#2d8ceb"/></svg>
<div style="left:1100px;top:916px;width:865px;height:4px;background:#14c424;"></div>
<div style="left:1089px;top:921px;width:877px;height:23px;background:#3c3c3c;"></div>
<div style="left:1094px;top:921px;width:871px;height:23px;background:linear-gradient(#8a95ea 0px,#6d7bdd 4px,#5f6dd6 14px,#4a5bc6 23px)"></div>
<svg style="position:absolute;left:1094px;top:921px;" width="871" height="23" viewBox="0 0 871 23"><filter id="nz" x="0" y="0" width="100%" height="100%"><feTurbulence type="fractalNoise" baseFrequency="0.9" numOctaves="2" seed="3"/><feColorMatrix values="0 0 0 0 1  0 0 0 0 1  0 0 0 0 1  0 0 0 0.35 -0.08"/></filter><rect width="871" height="23" filter="url(#nz)"/></svg>
<div style="left:1101px;top:945px;width:864px;height:24px;background:#333333;"></div>
<div style="left:1089px;top:945px;width:12px;height:24px;background:#2b2b2b;"></div>
<div style="left:1101px;top:969px;width:864px;height:24px;background:#333333;"></div>
<div style="left:1089px;top:969px;width:12px;height:24px;background:#2b2b2b;"></div>
<div style="left:1101px;top:994px;width:864px;height:24px;background:#333333;"></div>
<div style="left:1089px;top:994px;width:12px;height:24px;background:#2b2b2b;"></div>
<div style="left:1089px;top:944px;width:877px;height:1px;background:#272727;"></div>
<div style="left:1089px;top:968px;width:877px;height:1px;background:#272727;"></div>
<div style="left:1089px;top:993px;width:877px;height:1px;background:#272727;"></div>
<div style="left:1089px;top:1018px;width:877px;height:1px;background:#272727;"></div>
<div style="left:1089px;top:1019px;width:877px;height:23px;background:#333333;"></div>
<div style="left:1101px;top:1019px;width:863px;height:23px;background:#766b59;border-radius:6px 6px 0 0"></div>
<div style="left:1089px;top:1042px;width:877px;height:160px;background:#353535;"></div>
<div style="left:1089px;top:1042px;width:12px;height:160px;background:#2b2b2b;"></div>
<div style="left:1966px;top:921px;width:11px;height:281px;background:#2b2b2b;"></div>
<div style="left:1966px;top:921px;width:9px;height:23px;background:#444444;"></div>
<div style="left:1977px;top:921px;width:22px;height:281px;background:#272727;"></div>
<svg style="position:absolute;left:1095px;top:950px;" width="10" height="16" viewBox="0 0 10 16"><path d="M0 1 H10 M0 15 H10" stroke="#b8b8b8" stroke-width="1.6"/><path d="M3 1 Q5 1 5 3 V13 Q5 15 3 15 M7 1 Q5 1 5 3 V13 Q5 15 7 15" fill="none" stroke="#b8b8b8" stroke-width="1.4"/><rect x="2.6" y="2" width="4.8" height="12" fill="#b8b8b8"/></svg>
<svg style="position:absolute;left:1095px;top:974px;" width="10" height="16" viewBox="0 0 10 16"><path d="M0 1 H10 M0 15 H10" stroke="#b8b8b8" stroke-width="1.6"/><path d="M3 1 Q5 1 5 3 V13 Q5 15 3 15 M7 1 Q5 1 5 3 V13 Q5 15 7 15" fill="none" stroke="#b8b8b8" stroke-width="1.4"/><rect x="2.6" y="2" width="4.8" height="12" fill="#b8b8b8"/></svg>
<svg style="position:absolute;left:1095px;top:999px;" width="10" height="16" viewBox="0 0 10 16"><path d="M0 1 H10 M0 15 H10" stroke="#b8b8b8" stroke-width="1.6"/><path d="M3 1 Q5 1 5 3 V13 Q5 15 3 15 M7 1 Q5 1 5 3 V13 Q5 15 7 15" fill="none" stroke="#b8b8b8" stroke-width="1.4"/><rect x="2.6" y="2" width="4.8" height="12" fill="#b8b8b8"/></svg>
<div style="left:1099px;top:880px;width:2px;height:322px;background:#2e88e0;"></div>
<svg style="position:absolute;left:1092px;top:871px;" width="16" height="19" viewBox="0 0 16 19"><path d="M0 0 H16 V7 L8 19 L0 7 Z" fill="#2d8ceb"/></svg>
<div style="left:1099px;top:880px;width:2px;height:9px;background:#8a8a8a;"></div>
<div style="left:1094px;top:927px;width:24px;height:22px;background:transparent;border:1.5px solid rgba(45,95,160,0.7)"></div>
<div style="left:1147px;top:929px;width:103px;height:19px;background:transparent;border:1.5px solid rgba(45,95,160,0.7)"></div>
<svg style="position:absolute;left:1979px;top:895px;" width="18" height="21" viewBox="0 0 18 21"><path d="M0 0 H18 V12 L9 21 L0 12 Z" fill="#a8a8a8"/></svg>
<svg style="position:absolute;left:1975px;top:923px;" width="24" height="22" viewBox="0 0 24 22"><path d="M1.5 14.5 L12 2 V14.5 Z" fill="none" stroke="#b0b0b0" stroke-width="1.4"/><rect x="11.5" y="5" width="9.5" height="10" fill="#b0b0b0"/><circle cx="10" cy="17" r="3.8" fill="#272727" stroke="#b0b0b0" stroke-width="1.5"/></svg>
<div style="left:3px;top:1202px;width:1240px;height:2px;background:#0e0e0e;"></div>
<div style="left:3px;top:1204px;width:1240px;height:26px;background:#282828;"></div>
<div style="left:1243px;top:1201px;width:756px;height:29px;background:#232323;"></div>
<div style="left:9px;top:1205px;width:22px;height:23px;background:#232323;"></div>
<svg style="position:absolute;left:13px;top:1208px;" width="17" height="17" viewBox="0 0 17 17"><rect x="0.8" y="0.8" width="10" height="10" fill="none" stroke="#2d8ceb" stroke-width="1.6"/><rect x="4" y="4" width="10" height="10" fill="#282828" stroke="#2d8ceb" stroke-width="1.6"/><rect x="6.5" y="6.5" width="10" height="10" fill="#282828" stroke="#2d8ceb" stroke-width="1.6"/><rect x="10" y="10" width="3" height="3" fill="#2d8ceb"/></svg>
<div style="left:37px;top:1205px;width:22px;height:23px;background:#232323;"></div>
<svg style="position:absolute;left:40px;top:1207px;" width="18" height="18" viewBox="0 0 18 18"><path d="M6 6 H11 A5.2 5.2 0 0 1 6 11 Z" fill="#2d8ceb"/><circle cx="6" cy="6.2" r="5.2" fill="none" stroke="#2d8ceb" stroke-width="1.5"/><path d="M6 11.2 V16.8 H16.2 V6 H11.2" fill="none" stroke="#2d8ceb" stroke-width="1.6"/></svg>
<svg style="position:absolute;left:66px;top:1207px;" width="19" height="17" viewBox="0 0 19 17"><rect x="7.5" y="0.5" width="4" height="16" fill="#454545"/><path d="M6 0.5 H4.5 V7 L1.5 8.5 L4.5 10 V16.5 H6 M13 0.5 H14.5 V7 L17.5 8.5 L14.5 10 V16.5 H13" fill="none" stroke="#b0b0b0" stroke-width="1.8"/></svg>
<svg style="position:absolute;left:93px;top:1207px;" width="19" height="16" viewBox="0 0 19 16"><circle cx="6.5" cy="7.5" r="5.6" fill="#b0b0b0"/><path d="M0.5 14.5 Q2 12 5 12.5 H15 Q17 12.5 16.5 15 H1 Z" fill="#b0b0b0"/><path d="M11 13 L13.5 4.5 M13 13 L16.8 5.5" stroke="#b0b0b0" stroke-width="1.1"/><circle cx="13.5" cy="4" r="1.4" fill="#b0b0b0"/><circle cx="17" cy="5" r="1.4" fill="#b0b0b0"/></svg>
<div class="t" style="left:152px;top:1208px;font-size:15.5px;color:#b4b4b4;transform:scaleY(1.16);transform-origin:0 14px;">Frame Render Time</div>
<div class="t" style="left:298px;top:1208px;font-size:15.5px;color:#4fcaa0;transform:scaleY(1.16);transform-origin:0 14px;-webkit-text-stroke-width:0.75px">24ms</div>
<svg style="position:absolute;left:1097px;top:1211px;" width="14" height="6" viewBox="0 0 14 6"><path d="M0 6 L3 2.5 L5 4 L8.5 0 L14 6 Z" fill="#a8a8a8"/></svg>
<div style="left:1141px;top:1214px;width:55px;height:2px;background:#444;"></div>
<svg style="position:absolute;left:1126px;top:1210px;" width="15" height="15" viewBox="0 0 15 15"><circle cx="7.5" cy="7.5" r="6.2" fill="#282828" stroke="#9a9a9a" stroke-width="2"/></svg>
<svg style="position:absolute;left:1212px;top:1210px;" width="25" height="10" viewBox="0 0 25 10"><path d="M0 10 L6 3 L9 3 L3 10 Z M7 10 L15 0 L25 10 Z" fill="#b0b0b0"/></svg>
<svg style="position:absolute;left:0px;top:0px;pointer-events:none" width="1999" height="1230" viewBox="0 0 1999 1230"><line x1="1590" y1="376" x2="1268" y2="906" stroke="#00ee00" stroke-width="4.5" stroke-linecap="round"/><path d="M1251 934 L1263.5 899 L1277 907 Z" fill="#00ee00"/></svg>
</div></body></html>
